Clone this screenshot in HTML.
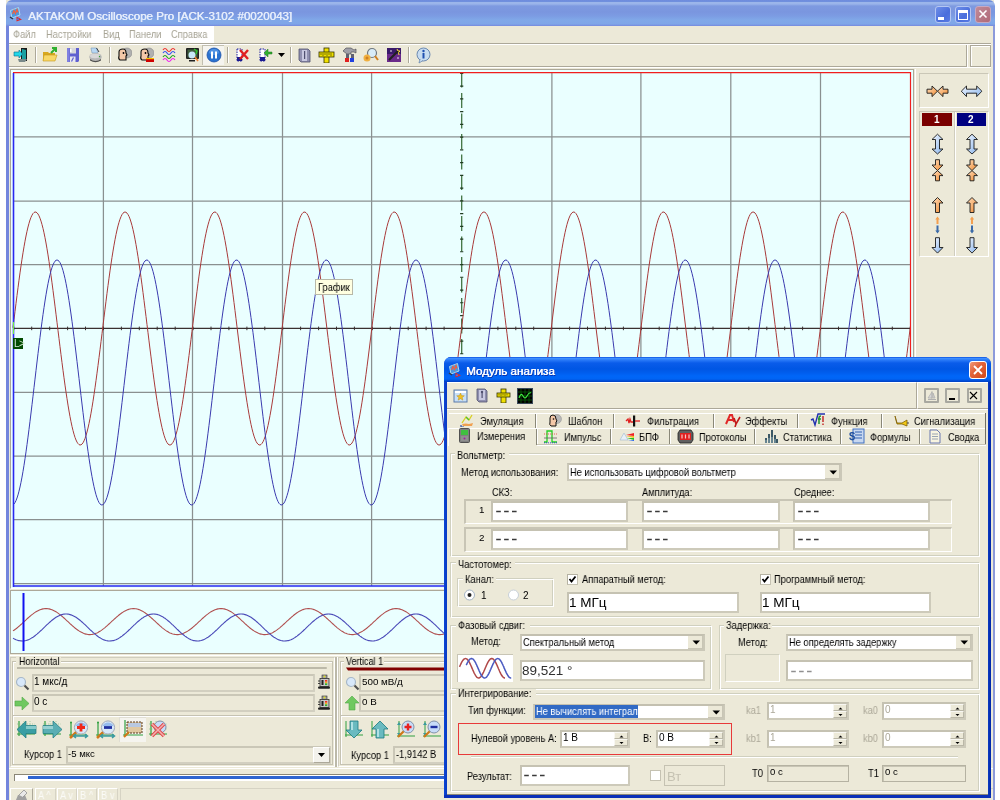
<!DOCTYPE html>
<html><head><meta charset="utf-8"><style>
html,body{margin:0;padding:0;width:1000px;height:800px;overflow:hidden;background:#fff;}
.a{position:absolute;}
.t{position:absolute;white-space:nowrap;font-family:"Liberation Sans", sans-serif;will-change:transform;}
svg{position:absolute;left:0;top:0;}
</style></head><body>
<div class="a" style="left:6px;top:0px;width:988px;height:800px;background:#ECE9D8;"></div><div class="a" style="left:6px;top:0px;width:989px;height:26px;background:linear-gradient(to bottom,#6F8CDD 0px,#7090DE 1.5px,#9CB6EA 2.5px,#9AB4EA 4px,#7E9AE0 6px,#7A96DF 12px,#7C9CE3 16px,#80A8E8 20px,#7FA6E8 24px,#7890E0 25.5px,#7088DC 26px);border-radius:6px 6px 0 0;"></div><div class="a" style="left:6px;top:26px;width:3px;height:774px;background:#7385DD;"></div><div class="a" style="left:993px;top:26px;width:2px;height:774px;background:#8C9ADA;"></div><svg class="a" style="left:9px;top:6px" width="16" height="16" viewBox="0 0 16 16"><path d="M1.5 4.5 L9.5 1.5 L11 9 L3 12 Z" fill="#4A98E0" stroke="#A8D8F0" stroke-width="1"/><path d="M3.5 8 L5 4.5 L6.5 7.5 L8 3.5 L9 6.5" stroke="#F06040" stroke-width="1.2" fill="none"/><path d="M1 11 L4 13" stroke="#303848" stroke-width="1.5"/><path d="M7.5 10.5 L13 13.5 L7.5 15.5 Z" fill="#E02828"/><circle cx="9" cy="13.2" r="0.9" fill="#4080F0"/></svg><div class="t" style="left:27.5px;top:10.18px;font-size:11.6px;line-height:11.6px;color:#E6EDFB;font-weight:normal;text-shadow:0.5px 0 0 #E6EDFB;">AKTAKOM Oscilloscope Pro [ACK-3102 #0020043]</div><div class="a" style="left:935px;top:6px;width:16px;height:17px;background:linear-gradient(135deg,#6F8FE8,#4A6EDC 60%,#5A7CE4);border:1px solid #B4C6F2;border-radius:3px;box-sizing:border-box;"></div><div class="a" style="left:955px;top:6px;width:16px;height:17px;background:linear-gradient(135deg,#6F8FE8,#4A6EDC 60%,#5A7CE4);border:1px solid #B4C6F2;border-radius:3px;box-sizing:border-box;"></div><div class="a" style="left:938px;top:17px;width:6px;height:3px;background:#fff;"></div><div class="a" style="left:958px;top:10px;width:10px;height:10px;border:1px solid #fff;border-top-width:3px;box-sizing:border-box;"></div><div class="a" style="left:975px;top:6px;width:16px;height:17px;background:linear-gradient(135deg,#C08A98,#B06A78);border:1px solid #C8A8C0;border-radius:3px;box-sizing:border-box;"></div><svg class="a" style="left:975px;top:6px" width="16" height="17"><path d="M4.5 4.5 L11.5 11.5 M11.5 4.5 L4.5 11.5" stroke="#fff" stroke-width="1.6"/></svg><div class="a" style="left:9px;top:26px;width:205px;height:17px;background:#fff;"></div><div class="t" style="left:13.0px;top:28.70px;font-size:10.51px;line-height:10.51px;color:#A7A495;font-weight:normal;transform:scaleX(0.885);transform-origin:0 0;">Файл</div><div class="t" style="left:45.8px;top:28.70px;font-size:10.51px;line-height:10.51px;color:#A7A495;font-weight:normal;transform:scaleX(0.885);transform-origin:0 0;">Настройки</div><div class="t" style="left:102.5px;top:28.70px;font-size:10.51px;line-height:10.51px;color:#A7A495;font-weight:normal;transform:scaleX(0.885);transform-origin:0 0;">Вид</div><div class="t" style="left:128.8px;top:28.70px;font-size:10.51px;line-height:10.51px;color:#A7A495;font-weight:normal;transform:scaleX(0.885);transform-origin:0 0;">Панели</div><div class="t" style="left:171.3px;top:28.70px;font-size:10.51px;line-height:10.51px;color:#A7A495;font-weight:normal;transform:scaleX(0.885);transform-origin:0 0;">Справка</div><div class="a" style="left:9px;top:43px;width:982px;height:1px;background:#ACA899;"></div><div class="a" style="left:9px;top:44px;width:982px;height:1px;background:#fff;"></div><div class="a" style="left:9px;top:66px;width:957px;height:1px;background:#ACA899;"></div><div class="a" style="left:9px;top:67px;width:982px;height:1px;background:#fff;"></div><div class="a" style="left:966px;top:45px;width:1px;height:22px;background:#ACA899;"></div><div class="a" style="left:967px;top:45px;width:1px;height:22px;background:#fff;"></div><div class="a" style="left:970px;top:45px;width:21px;height:22px;border:1px solid #ACA899;box-sizing:border-box;box-shadow:inset 1px 1px 0 #fff;"></div><div class="a" style="left:35px;top:47px;width:1px;height:16px;background:#ACA899;"></div><div class="a" style="left:36px;top:47px;width:1px;height:16px;background:#fff;"></div><div class="a" style="left:109px;top:47px;width:1px;height:16px;background:#ACA899;"></div><div class="a" style="left:110px;top:47px;width:1px;height:16px;background:#fff;"></div><div class="a" style="left:227px;top:47px;width:1px;height:16px;background:#ACA899;"></div><div class="a" style="left:228px;top:47px;width:1px;height:16px;background:#fff;"></div><div class="a" style="left:290px;top:47px;width:1px;height:16px;background:#ACA899;"></div><div class="a" style="left:291px;top:47px;width:1px;height:16px;background:#fff;"></div><div class="a" style="left:408px;top:47px;width:1px;height:16px;background:#ACA899;"></div><div class="a" style="left:409px;top:47px;width:1px;height:16px;background:#fff;"></div><div class="a" style="left:202px;top:45px;width:22px;height:20px;background:#F5F4EF;border-top:1px solid #C2BFB0;border-left:1px solid #C2BFB0;box-sizing:border-box;"></div><div class="a" style="left:10px;top:69px;width:904px;height:520px;background:#EAFFFF;border-top:1px solid #ACA899;border-left:1px solid #ACA899;border-right:1px solid #ACA899;border-bottom:1px solid #fff;box-sizing:border-box;"></div><svg class="a" style="left:0;top:0" width="1000" height="800"><line x1="103.4" y1="72" x2="103.4" y2="586" stroke="#8A9090" stroke-width="1.25"/><line x1="192.5" y1="72" x2="192.5" y2="586" stroke="#8A9090" stroke-width="1.25"/><line x1="282.5" y1="72" x2="282.5" y2="586" stroke="#8A9090" stroke-width="1.25"/><line x1="371.6" y1="72" x2="371.6" y2="586" stroke="#8A9090" stroke-width="1.25"/><line x1="551.9" y1="72" x2="551.9" y2="586" stroke="#8A9090" stroke-width="1.25"/><line x1="640.9" y1="72" x2="640.9" y2="586" stroke="#8A9090" stroke-width="1.25"/><line x1="730.8" y1="72" x2="730.8" y2="586" stroke="#8A9090" stroke-width="1.25"/><line x1="820.5" y1="72" x2="820.5" y2="586" stroke="#8A9090" stroke-width="1.25"/><line x1="13" y1="136.8" x2="910" y2="136.8" stroke="#8A9090" stroke-width="1.25"/><line x1="13" y1="201.2" x2="910" y2="201.2" stroke="#8A9090" stroke-width="1.25"/><line x1="13" y1="264.5" x2="910" y2="264.5" stroke="#8A9090" stroke-width="1.25"/><line x1="13" y1="392.3" x2="910" y2="392.3" stroke="#8A9090" stroke-width="1.25"/><line x1="13" y1="456.0" x2="910" y2="456.0" stroke="#8A9090" stroke-width="1.25"/><line x1="13" y1="519.5" x2="910" y2="519.5" stroke="#8A9090" stroke-width="1.25"/><line x1="13" y1="583.7" x2="910" y2="583.7" stroke="#8A9090" stroke-width="1.25"/><line x1="13" y1="328.4" x2="910" y2="328.4" stroke="#3A3030" stroke-width="1.25"/><path d="M13.8 326.59999999999997 V330.2 M31.7 326.59999999999997 V330.2 M49.7 326.59999999999997 V330.2 M67.6 326.59999999999997 V330.2 M85.5 326.59999999999997 V330.2 M103.4 326.59999999999997 V330.2 M121.4 326.59999999999997 V330.2 M139.3 326.59999999999997 V330.2 M157.2 326.59999999999997 V330.2 M175.2 326.59999999999997 V330.2 M193.1 326.59999999999997 V330.2 M211.0 326.59999999999997 V330.2 M228.9 326.59999999999997 V330.2 M246.9 326.59999999999997 V330.2 M264.8 326.59999999999997 V330.2 M282.7 326.59999999999997 V330.2 M300.6 326.59999999999997 V330.2 M318.6 326.59999999999997 V330.2 M336.5 326.59999999999997 V330.2 M354.4 326.59999999999997 V330.2 M372.4 326.59999999999997 V330.2 M390.3 326.59999999999997 V330.2 M408.2 326.59999999999997 V330.2 M426.1 326.59999999999997 V330.2 M444.1 326.59999999999997 V330.2 M462.0 326.59999999999997 V330.2 M479.9 326.59999999999997 V330.2 M497.9 326.59999999999997 V330.2 M515.8 326.59999999999997 V330.2 M533.7 326.59999999999997 V330.2 M551.6 326.59999999999997 V330.2 M569.6 326.59999999999997 V330.2 M587.5 326.59999999999997 V330.2 M605.4 326.59999999999997 V330.2 M623.4 326.59999999999997 V330.2 M641.3 326.59999999999997 V330.2 M659.2 326.59999999999997 V330.2 M677.1 326.59999999999997 V330.2 M695.1 326.59999999999997 V330.2 M713.0 326.59999999999997 V330.2 M730.9 326.59999999999997 V330.2 M748.8 326.59999999999997 V330.2 M766.8 326.59999999999997 V330.2 M784.7 326.59999999999997 V330.2 M802.6 326.59999999999997 V330.2 M820.6 326.59999999999997 V330.2 M838.5 326.59999999999997 V330.2 M856.4 326.59999999999997 V330.2 M874.3 326.59999999999997 V330.2 M892.3 326.59999999999997 V330.2 M910.2 326.59999999999997 V330.2" stroke="#3A3030" stroke-width="1"/><line x1="461.7" y1="72.6" x2="461.7" y2="586" stroke="#3C6E3C" stroke-width="1.25" stroke-dasharray="15 5.5"/><path d="M460.09999999999997 73.4 H463.3 M460.09999999999997 86.1 H463.3 M460.09999999999997 98.9 H463.3 M460.09999999999997 111.6 H463.3 M460.09999999999997 124.4 H463.3 M460.09999999999997 137.1 H463.3 M460.09999999999997 149.9 H463.3 M460.09999999999997 162.6 H463.3 M460.09999999999997 175.4 H463.3 M460.09999999999997 188.1 H463.3 M460.09999999999997 200.9 H463.3 M460.09999999999997 213.6 H463.3 M460.09999999999997 226.4 H463.3 M460.09999999999997 239.1 H463.3 M460.09999999999997 251.8 H463.3 M460.09999999999997 264.6 H463.3 M460.09999999999997 277.3 H463.3 M460.09999999999997 290.1 H463.3 M460.09999999999997 302.8 H463.3 M460.09999999999997 315.6 H463.3 M460.09999999999997 328.3 H463.3 M460.09999999999997 341.1 H463.3 M460.09999999999997 353.8 H463.3 M460.09999999999997 366.6 H463.3 M460.09999999999997 379.3 H463.3 M460.09999999999997 392.0 H463.3 M460.09999999999997 404.8 H463.3 M460.09999999999997 417.5 H463.3 M460.09999999999997 430.3 H463.3 M460.09999999999997 443.0 H463.3 M460.09999999999997 455.8 H463.3 M460.09999999999997 468.5 H463.3 M460.09999999999997 481.3 H463.3 M460.09999999999997 494.0 H463.3 M460.09999999999997 506.8 H463.3 M460.09999999999997 519.5 H463.3 M460.09999999999997 532.3 H463.3 M460.09999999999997 545.0 H463.3 M460.09999999999997 557.7 H463.3 M460.09999999999997 570.5 H463.3 M460.09999999999997 583.2 H463.3" stroke="#203A20" stroke-width="1.1"/><polyline points="13.0,327.7 14.0,319.5 15.0,311.4 16.0,303.4 17.0,295.5 18.0,287.8 19.0,280.2 20.0,272.9 21.0,265.9 22.0,259.2 23.0,252.8 24.0,246.8 25.0,241.2 26.0,236.0 27.0,231.3 28.0,227.0 29.0,223.3 30.0,220.0 31.0,217.3 32.0,215.2 33.0,213.5 34.0,212.5 35.0,212.0 36.0,212.1 37.0,212.8 38.0,214.0 39.0,215.8 40.0,218.2 41.0,221.1 42.0,224.5 43.0,228.4 44.0,232.8 45.0,237.7 46.0,243.0 47.0,248.8 48.0,254.9 49.0,261.4 50.0,268.3 51.0,275.4 52.0,282.8 53.0,290.4 54.0,298.2 55.0,306.1 56.0,314.2 57.0,322.3 58.0,330.5 59.0,338.6 60.0,346.7 61.0,354.7 62.0,362.6 63.0,370.3 64.0,377.8 65.0,385.1 66.0,392.1 67.0,398.7 68.0,405.1 69.0,411.0 70.0,416.6 71.0,421.7 72.0,426.4 73.0,430.5 74.0,434.2 75.0,437.4 76.0,440.0 77.0,442.1 78.0,443.6 79.0,444.6 80.0,445.0 81.0,444.8 82.0,444.1 83.0,442.8 84.0,440.9 85.0,438.5 86.0,435.5 87.0,432.0 88.0,428.0 89.0,423.5 90.0,418.6 91.0,413.2 92.0,407.4 93.0,401.2 94.0,394.6 95.0,387.8 96.0,380.6 97.0,373.2 98.0,365.5 99.0,357.7 100.0,349.8 101.0,341.7 102.0,333.6 103.0,325.4 104.0,317.3 105.0,309.2 106.0,301.2 107.0,293.3 108.0,285.6 109.0,278.2 110.0,270.9 111.0,264.0 112.0,257.4 113.0,251.1 114.0,245.2 115.0,239.7 116.0,234.6 117.0,230.0 118.0,225.9 119.0,222.3 120.0,219.2 121.0,216.7 122.0,214.6 123.0,213.2 124.0,212.3 125.0,212.0 126.0,212.3 127.0,213.1 128.0,214.5 129.0,216.4 130.0,218.9 131.0,222.0 132.0,225.5 133.0,229.6 134.0,234.1 135.0,239.2 136.0,244.6 137.0,250.5 138.0,256.7 139.0,263.3 140.0,270.2 141.0,277.4 142.0,284.9 143.0,292.5 144.0,300.4 145.0,308.4 146.0,316.4 147.0,324.6 148.0,332.7 149.0,340.9 150.0,349.0 151.0,356.9 152.0,364.8 153.0,372.4 154.0,379.9 155.0,387.1 156.0,394.0 157.0,400.5 158.0,406.8 159.0,412.6 160.0,418.1 161.0,423.0 162.0,427.6 163.0,431.6 164.0,435.2 165.0,438.2 166.0,440.7 167.0,442.6 168.0,444.0 169.0,444.8 170.0,445.0 171.0,444.7 172.0,443.8 173.0,442.3 174.0,440.3 175.0,437.7 176.0,434.6 177.0,430.9 178.0,426.8 179.0,422.2 180.0,417.1 181.0,411.6 182.0,405.7 183.0,399.4 184.0,392.7 185.0,385.8 186.0,378.5 187.0,371.1 188.0,363.4 189.0,355.5 190.0,347.5 191.0,339.4 192.0,331.3 193.0,323.1 194.0,315.0 195.0,306.9 196.0,299.0 197.0,291.2 198.0,283.5 199.0,276.1 200.0,269.0 201.0,262.1 202.0,255.6 203.0,249.4 204.0,243.6 205.0,238.2 206.0,233.3 207.0,228.8 208.0,224.9 209.0,221.4 210.0,218.4 211.0,216.0 212.0,214.2 213.0,212.9 214.0,212.2 215.0,212.0 216.0,212.4 217.0,213.4 218.0,215.0 219.0,217.1 220.0,219.7 221.0,222.9 222.0,226.6 223.0,230.8 224.0,235.5 225.0,240.6 226.0,246.2 227.0,252.2 228.0,258.5 229.0,265.2 230.0,272.2 231.0,279.5 232.0,287.0 233.0,294.7 234.0,302.6 235.0,310.6 236.0,318.7 237.0,326.9 238.0,335.0 239.0,343.1 240.0,351.2 241.0,359.1 242.0,366.9 243.0,374.5 244.0,381.9 245.0,389.0 246.0,395.8 247.0,402.3 248.0,408.4 249.0,414.2 250.0,419.5 251.0,424.4 252.0,428.8 253.0,432.7 254.0,436.1 255.0,438.9 256.0,441.3 257.0,443.0 258.0,444.2 259.0,444.9 260.0,445.0 261.0,444.5 262.0,443.4 263.0,441.8 264.0,439.6 265.0,436.9 266.0,433.6 267.0,429.8 268.0,425.6 269.0,420.8 270.0,415.6 271.0,410.0 272.0,404.0 273.0,397.6 274.0,390.8 275.0,383.8 276.0,376.5 277.0,368.9 278.0,361.2 279.0,353.3 280.0,345.2 281.0,337.1 282.0,329.0 283.0,320.8 284.0,312.7 285.0,304.7 286.0,296.8 287.0,289.0 288.0,281.4 289.0,274.1 290.0,267.0 291.0,260.2 292.0,253.8 293.0,247.7 294.0,242.0 295.0,236.8 296.0,232.0 297.0,227.7 298.0,223.8 299.0,220.5 300.0,217.7 301.0,215.5 302.0,213.8 303.0,212.6 304.0,212.1 305.0,212.1 306.0,212.7 307.0,213.8 308.0,215.5 309.0,217.8 310.0,220.6 311.0,223.9 312.0,227.7 313.0,232.1 314.0,236.9 315.0,242.2 316.0,247.8 317.0,253.9 318.0,260.4 319.0,267.1 320.0,274.2 321.0,281.6 322.0,289.1 323.0,296.9 324.0,304.8 325.0,312.9 326.0,321.0 327.0,329.2 328.0,337.3 329.0,345.4 330.0,353.4 331.0,361.3 332.0,369.1 333.0,376.6 334.0,383.9 335.0,391.0 336.0,397.7 337.0,404.1 338.0,410.1 339.0,415.7 340.0,420.9 341.0,425.6 342.0,429.9 343.0,433.7 344.0,436.9 345.0,439.6 346.0,441.8 347.0,443.4 348.0,444.5 349.0,445.0 350.0,444.9 351.0,444.2 352.0,443.0 353.0,441.2 354.0,438.9 355.0,436.0 356.0,432.6 357.0,428.7 358.0,424.3 359.0,419.4 360.0,414.1 361.0,408.3 362.0,402.2 363.0,395.7 364.0,388.9 365.0,381.8 366.0,374.4 367.0,366.8 368.0,359.0 369.0,351.0 370.0,343.0 371.0,334.9 372.0,326.7 373.0,318.6 374.0,310.5 375.0,302.5 376.0,294.6 377.0,286.9 378.0,279.3 379.0,272.1 380.0,265.1 381.0,258.4 382.0,252.1 383.0,246.1 384.0,240.5 385.0,235.4 386.0,230.7 387.0,226.5 388.0,222.8 389.0,219.7 390.0,217.0 391.0,214.9 392.0,213.4 393.0,212.4 394.0,212.0 395.0,212.2 396.0,212.9 397.0,214.2 398.0,216.1 399.0,218.5 400.0,221.4 401.0,224.9 402.0,228.9 403.0,233.4 404.0,238.3 405.0,243.7 406.0,249.5 407.0,255.7 408.0,262.2 409.0,269.1 410.0,276.3 411.0,283.7 412.0,291.3 413.0,299.1 414.0,307.1 415.0,315.1 416.0,323.3 417.0,331.4 418.0,339.6 419.0,347.7 420.0,355.7 421.0,363.5 422.0,371.2 423.0,378.7 424.0,385.9 425.0,392.9 426.0,399.5 427.0,405.8 428.0,411.7 429.0,417.2 430.0,422.3 431.0,426.9 432.0,431.0 433.0,434.6 434.0,437.7 435.0,440.3 436.0,442.3 437.0,443.8 438.0,444.7 439.0,445.0 440.0,444.8 441.0,443.9 442.0,442.6 443.0,440.6 444.0,438.1 445.0,435.1 446.0,431.5 447.0,427.5 448.0,423.0 449.0,417.9 450.0,412.5 451.0,406.7 452.0,400.4 453.0,393.8 454.0,386.9 455.0,379.7 456.0,372.3 457.0,364.6 458.0,356.8 459.0,348.8 460.0,340.7 461.0,332.6 462.0,324.4 463.0,316.3 464.0,308.2 465.0,300.2 466.0,292.4 467.0,284.7 468.0,277.3 469.0,270.1 470.0,263.2 471.0,256.6 472.0,250.3 473.0,244.5 474.0,239.1 475.0,234.0 476.0,229.5 477.0,225.5 478.0,221.9 479.0,218.9 480.0,216.4 481.0,214.4 482.0,213.1 483.0,212.2 484.0,212.0 485.0,212.3 486.0,213.2 487.0,214.7 488.0,216.7 489.0,219.3 490.0,222.4 491.0,226.0 492.0,230.1 493.0,234.7 494.0,239.8 495.0,245.3 496.0,251.2 497.0,257.5 498.0,264.1 499.0,271.1 500.0,278.3 501.0,285.8 502.0,293.5 503.0,301.3 504.0,309.3 505.0,317.4 506.0,325.6 507.0,333.7 508.0,341.9 509.0,349.9 510.0,357.9 511.0,365.7 512.0,373.3 513.0,380.7 514.0,387.9 515.0,394.8 516.0,401.3 517.0,407.5 518.0,413.3 519.0,418.7 520.0,423.6 521.0,428.1 522.0,432.1 523.0,435.6 524.0,438.5 525.0,440.9 526.0,442.8 527.0,444.1 528.0,444.8 529.0,445.0 530.0,444.6 531.0,443.6 532.0,442.1 533.0,440.0 534.0,437.3 535.0,434.2 536.0,430.5 537.0,426.3 538.0,421.6 539.0,416.5 540.0,410.9 541.0,404.9 542.0,398.6 543.0,391.9 544.0,384.9 545.0,377.7 546.0,370.1 547.0,362.4 548.0,354.5 549.0,346.5 550.0,338.4 551.0,330.3 552.0,322.1 553.0,314.0 554.0,306.0 555.0,298.0 556.0,290.2 557.0,282.6 558.0,275.2 559.0,268.1 560.0,261.3 561.0,254.8 562.0,248.7 563.0,242.9 564.0,237.6 565.0,232.7 566.0,228.3 567.0,224.4 568.0,221.0 569.0,218.1 570.0,215.8 571.0,214.0 572.0,212.8 573.0,212.1 574.0,212.0 575.0,212.5 576.0,213.6 577.0,215.2 578.0,217.4 579.0,220.1 580.0,223.3 581.0,227.1 582.0,231.4 583.0,236.1 584.0,241.3 585.0,246.9 586.0,252.9 587.0,259.3 588.0,266.0 589.0,273.1 590.0,280.4 591.0,287.9 592.0,295.7 593.0,303.6 594.0,311.6 595.0,319.7 596.0,327.8 597.0,336.0 598.0,344.1 599.0,352.2 600.0,360.1 601.0,367.9 602.0,375.4 603.0,382.8 604.0,389.9 605.0,396.6 606.0,403.1 607.0,409.2 608.0,414.8 609.0,420.1 610.0,424.9 611.0,429.3 612.0,433.1 613.0,436.4 614.0,439.2 615.0,441.5 616.0,443.2 617.0,444.3 618.0,444.9 619.0,444.9 620.0,444.4 621.0,443.2 622.0,441.5 623.0,439.3 624.0,436.5 625.0,433.2 626.0,429.3 627.0,425.0 628.0,420.2 629.0,415.0 630.0,409.3 631.0,403.2 632.0,396.8 633.0,390.0 634.0,382.9 635.0,375.6 636.0,368.0 637.0,360.2 638.0,352.3 639.0,344.3 640.0,336.2 641.0,328.0 642.0,319.9 643.0,311.8 644.0,303.7 645.0,295.8 646.0,288.1 647.0,280.5 648.0,273.2 649.0,266.2 650.0,259.4 651.0,253.0 652.0,247.0 653.0,241.4 654.0,236.2 655.0,231.4 656.0,227.2 657.0,223.4 658.0,220.1 659.0,217.4 660.0,215.2 661.0,213.6 662.0,212.5 663.0,212.0 664.0,212.1 665.0,212.8 666.0,214.0 667.0,215.7 668.0,218.1 669.0,220.9 670.0,224.3 671.0,228.2 672.0,232.6 673.0,237.5 674.0,242.8 675.0,248.6 676.0,254.7 677.0,261.2 678.0,268.0 679.0,275.1 680.0,282.5 681.0,290.1 682.0,297.9 683.0,305.8 684.0,313.9 685.0,322.0 686.0,330.1 687.0,338.3 688.0,346.4 689.0,354.4 690.0,362.3 691.0,370.0 692.0,377.5 693.0,384.8 694.0,391.8 695.0,398.5 696.0,404.8 697.0,410.8 698.0,416.4 699.0,421.5 700.0,426.2 701.0,430.4 702.0,434.1 703.0,437.3 704.0,439.9 705.0,442.0 706.0,443.6 707.0,444.6 708.0,445.0 709.0,444.8 710.0,444.1 711.0,442.8 712.0,441.0 713.0,438.6 714.0,435.6 715.0,432.1 716.0,428.2 717.0,423.7 718.0,418.8 719.0,413.4 720.0,407.6 721.0,401.4 722.0,394.9 723.0,388.0 724.0,380.9 725.0,373.5 726.0,365.8 727.0,358.0 728.0,350.1 729.0,342.0 730.0,333.9 731.0,325.7 732.0,317.6 733.0,309.5 734.0,301.5 735.0,293.6 736.0,285.9 737.0,278.5 738.0,271.2 739.0,264.3 740.0,257.6 741.0,251.3 742.0,245.4 743.0,239.9 744.0,234.8 745.0,230.2 746.0,226.1 747.0,222.4 748.0,219.3 749.0,216.7 750.0,214.7 751.0,213.2 752.0,212.3 753.0,212.0 754.0,212.2 755.0,213.0 756.0,214.4 757.0,216.3 758.0,218.8 759.0,221.8 760.0,225.4 761.0,229.4 762.0,234.0 763.0,238.9 764.0,244.4 765.0,250.2 766.0,256.5 767.0,263.0 768.0,269.9 769.0,277.1 770.0,284.6 771.0,292.2 772.0,300.1 773.0,308.0 774.0,316.1 775.0,324.3 776.0,332.4 777.0,340.6 778.0,348.6 779.0,356.6 780.0,364.5 781.0,372.1 782.0,379.6 783.0,386.8 784.0,393.7 785.0,400.3 786.0,406.5 787.0,412.4 788.0,417.8 789.0,422.9 790.0,427.4 791.0,431.5 792.0,435.0 793.0,438.1 794.0,440.6 795.0,442.5 796.0,443.9 797.0,444.7 798.0,445.0 799.0,444.7 800.0,443.8 801.0,442.4 802.0,440.3 803.0,437.8 804.0,434.7 805.0,431.1 806.0,427.0 807.0,422.4 808.0,417.3 809.0,411.8 810.0,405.9 811.0,399.6 812.0,393.0 813.0,386.1 814.0,378.8 815.0,371.4 816.0,363.7 817.0,355.8 818.0,347.8 819.0,339.7 820.0,331.6 821.0,323.4 822.0,315.3 823.0,307.2 824.0,299.3 825.0,291.5 826.0,283.8 827.0,276.4 828.0,269.2 829.0,262.4 830.0,255.8 831.0,249.6 832.0,243.8 833.0,238.4 834.0,233.5 835.0,229.0 836.0,225.0 837.0,221.5 838.0,218.5 839.0,216.1 840.0,214.2 841.0,212.9 842.0,212.2 843.0,212.0 844.0,212.4 845.0,213.4 846.0,214.9 847.0,217.0 848.0,219.6 849.0,222.8 850.0,226.5 851.0,230.6 852.0,235.3 853.0,240.4 854.0,246.0 855.0,251.9 856.0,258.3 857.0,264.9 858.0,271.9 859.0,279.2 860.0,286.7 861.0,294.4 862.0,302.3 863.0,310.3 864.0,318.4 865.0,326.5 866.0,334.7 867.0,342.8 868.0,350.9 869.0,358.8 870.0,366.6 871.0,374.2 872.0,381.6 873.0,388.7 874.0,395.6 875.0,402.1 876.0,408.2 877.0,414.0 878.0,419.3 879.0,424.2 880.0,428.6 881.0,432.5 882.0,435.9 883.0,438.8 884.0,441.2 885.0,443.0 886.0,444.2 887.0,444.9 888.0,445.0 889.0,444.5 890.0,443.5 891.0,441.8 892.0,439.7 893.0,437.0 894.0,433.7 895.0,430.0 896.0,425.7 897.0,421.0 898.0,415.8 899.0,410.2 900.0,404.2 901.0,397.8 902.0,391.1 903.0,384.1 904.0,376.8 905.0,369.2 906.0,361.5 907.0,353.6 908.0,345.6 909.0,337.5 910.0,329.3" fill="none" stroke="#A83A3A" stroke-width="1.0"/><polyline points="13.0,504.8 14.0,504.0 15.0,502.6 16.0,500.6 17.0,498.0 18.0,494.9 19.0,491.2 20.0,487.0 21.0,482.3 22.0,477.1 23.0,471.4 24.0,465.3 25.0,458.8 26.0,451.9 27.0,444.6 28.0,437.1 29.0,429.3 30.0,421.3 31.0,413.0 32.0,404.7 33.0,396.2 34.0,387.6 35.0,379.1 36.0,370.5 37.0,362.0 38.0,353.6 39.0,345.4 40.0,337.3 41.0,329.4 42.0,321.8 43.0,314.5 44.0,307.6 45.0,301.0 46.0,294.8 47.0,289.0 48.0,283.7 49.0,278.9 50.0,274.6 51.0,270.8 52.0,267.5 53.0,264.9 54.0,262.8 55.0,261.2 56.0,260.3 57.0,260.0 58.0,260.3 59.0,261.2 60.0,262.6 61.0,264.7 62.0,267.3 63.0,270.5 64.0,274.3 65.0,278.5 66.0,283.3 67.0,288.6 68.0,294.3 69.0,300.5 70.0,307.1 71.0,314.0 72.0,321.3 73.0,328.9 74.0,336.7 75.0,344.7 76.0,353.0 77.0,361.4 78.0,369.9 79.0,378.4 80.0,387.0 81.0,395.6 82.0,404.0 83.0,412.4 84.0,420.7 85.0,428.7 86.0,436.5 87.0,444.1 88.0,451.3 89.0,458.3 90.0,464.8 91.0,471.0 92.0,476.7 93.0,481.9 94.0,486.7 95.0,490.9 96.0,494.7 97.0,497.8 98.0,500.4 99.0,502.5 100.0,503.9 101.0,504.8 102.0,505.0 103.0,504.6 104.0,503.7 105.0,502.1 106.0,500.0 107.0,497.3 108.0,494.0 109.0,490.2 110.0,485.9 111.0,481.0 112.0,475.7 113.0,469.9 114.0,463.7 115.0,457.1 116.0,450.1 117.0,442.8 118.0,435.2 119.0,427.3 120.0,419.2 121.0,411.0 122.0,402.6 123.0,394.1 124.0,385.5 125.0,376.9 126.0,368.4 127.0,359.9 128.0,351.5 129.0,343.3 130.0,335.3 131.0,327.5 132.0,320.0 133.0,312.8 134.0,305.9 135.0,299.4 136.0,293.3 137.0,287.6 138.0,282.5 139.0,277.8 140.0,273.6 141.0,269.9 142.0,266.8 143.0,264.3 144.0,262.3 145.0,261.0 146.0,260.2 147.0,260.0 148.0,260.4 149.0,261.5 150.0,263.1 151.0,265.3 152.0,268.1 153.0,271.4 154.0,275.3 155.0,279.7 156.0,284.6 157.0,290.0 158.0,295.8 159.0,302.1 160.0,308.8 161.0,315.8 162.0,323.1 163.0,330.8 164.0,338.7 165.0,346.8 166.0,355.1 167.0,363.5 168.0,372.0 169.0,380.6 170.0,389.1 171.0,397.7 172.0,406.1 173.0,414.5 174.0,422.7 175.0,430.7 176.0,438.4 177.0,445.9 178.0,453.1 179.0,459.9 180.0,466.4 181.0,472.4 182.0,478.0 183.0,483.2 184.0,487.8 185.0,491.9 186.0,495.5 187.0,498.5 188.0,501.0 189.0,502.9 190.0,504.2 191.0,504.9 192.0,505.0 193.0,504.5 194.0,503.4 195.0,501.7 196.0,499.4 197.0,496.5 198.0,493.1 199.0,489.2 200.0,484.7 201.0,479.7 202.0,474.3 203.0,468.4 204.0,462.1 205.0,455.4 206.0,448.3 207.0,440.9 208.0,433.2 209.0,425.3 210.0,417.2 211.0,408.9 212.0,400.4 213.0,391.9 214.0,383.4 215.0,374.8 216.0,366.3 217.0,357.8 218.0,349.5 219.0,341.3 220.0,333.3 221.0,325.6 222.0,318.2 223.0,311.0 224.0,304.2 225.0,297.8 226.0,291.8 227.0,286.3 228.0,281.2 229.0,276.7 230.0,272.6 231.0,269.1 232.0,266.1 233.0,263.7 234.0,261.9 235.0,260.7 236.0,260.1 237.0,260.1 238.0,260.6 239.0,261.8 240.0,263.6 241.0,265.9 242.0,268.8 243.0,272.3 244.0,276.3 245.0,280.9 246.0,285.9 247.0,291.4 248.0,297.4 249.0,303.7 250.0,310.5 251.0,317.6 252.0,325.0 253.0,332.7 254.0,340.7 255.0,348.8 256.0,357.2 257.0,365.6 258.0,374.1 259.0,382.7 260.0,391.3 261.0,399.8 262.0,408.2 263.0,416.6 264.0,424.7 265.0,432.7 266.0,440.3 267.0,447.8 268.0,454.9 269.0,461.6 270.0,467.9 271.0,473.9 272.0,479.4 273.0,484.4 274.0,488.9 275.0,492.9 276.0,496.3 277.0,499.2 278.0,501.5 279.0,503.3 280.0,504.4 281.0,504.9 282.0,504.9 283.0,504.2 284.0,503.0 285.0,501.2 286.0,498.7 287.0,495.7 288.0,492.2 289.0,488.1 290.0,483.5 291.0,478.4 292.0,472.9 293.0,466.9 294.0,460.4 295.0,453.6 296.0,446.5 297.0,439.0 298.0,431.3 299.0,423.3 300.0,415.1 301.0,406.8 302.0,398.3 303.0,389.8 304.0,381.2 305.0,372.6 306.0,364.1 307.0,355.7 308.0,347.4 309.0,339.3 310.0,331.4 311.0,323.7 312.0,316.3 313.0,309.3 314.0,302.6 315.0,296.3 316.0,290.4 317.0,285.0 318.0,280.0 319.0,275.6 320.0,271.7 321.0,268.3 322.0,265.5 323.0,263.2 324.0,261.6 325.0,260.5 326.0,260.0 327.0,260.2 328.0,260.9 329.0,262.2 330.0,264.1 331.0,266.6 332.0,269.7 333.0,273.3 334.0,277.4 335.0,282.1 336.0,287.2 337.0,292.9 338.0,298.9 339.0,305.4 340.0,312.2 341.0,319.4 342.0,326.9 343.0,334.7 344.0,342.7 345.0,350.9 346.0,359.3 347.0,367.7 348.0,376.3 349.0,384.9 350.0,393.4 351.0,401.9 352.0,410.3 353.0,418.6 354.0,426.7 355.0,434.6 356.0,442.2 357.0,449.6 358.0,456.6 359.0,463.2 360.0,469.5 361.0,475.3 362.0,480.7 363.0,485.5 364.0,489.9 365.0,493.8 366.0,497.1 367.0,499.8 368.0,502.0 369.0,503.6 370.0,504.6 371.0,505.0 372.0,504.8 373.0,504.0 374.0,502.6 375.0,500.6 376.0,498.0 377.0,494.9 378.0,491.2 379.0,487.0 380.0,482.3 381.0,477.1 382.0,471.4 383.0,465.3 384.0,458.8 385.0,451.9 386.0,444.6 387.0,437.1 388.0,429.3 389.0,421.3 390.0,413.0 391.0,404.7 392.0,396.2 393.0,387.6 394.0,379.1 395.0,370.5 396.0,362.0 397.0,353.6 398.0,345.4 399.0,337.3 400.0,329.4 401.0,321.8 402.0,314.5 403.0,307.6 404.0,301.0 405.0,294.8 406.0,289.0 407.0,283.7 408.0,278.9 409.0,274.6 410.0,270.8 411.0,267.5 412.0,264.9 413.0,262.8 414.0,261.2 415.0,260.3 416.0,260.0 417.0,260.3 418.0,261.2 419.0,262.6 420.0,264.7 421.0,267.3 422.0,270.5 423.0,274.3 424.0,278.5 425.0,283.3 426.0,288.6 427.0,294.3 428.0,300.5 429.0,307.1 430.0,314.0 431.0,321.3 432.0,328.9 433.0,336.7 434.0,344.7 435.0,353.0 436.0,361.4 437.0,369.9 438.0,378.4 439.0,387.0 440.0,395.6 441.0,404.0 442.0,412.4 443.0,420.7 444.0,428.7 445.0,436.5 446.0,444.1 447.0,451.3 448.0,458.3 449.0,464.8 450.0,471.0 451.0,476.7 452.0,481.9 453.0,486.7 454.0,490.9 455.0,494.7 456.0,497.8 457.0,500.4 458.0,502.5 459.0,503.9 460.0,504.8 461.0,505.0 462.0,504.6 463.0,503.7 464.0,502.1 465.0,500.0 466.0,497.3 467.0,494.0 468.0,490.2 469.0,485.9 470.0,481.0 471.0,475.7 472.0,469.9 473.0,463.7 474.0,457.1 475.0,450.1 476.0,442.8 477.0,435.2 478.0,427.3 479.0,419.2 480.0,411.0 481.0,402.6 482.0,394.1 483.0,385.5 484.0,376.9 485.0,368.4 486.0,359.9 487.0,351.5 488.0,343.3 489.0,335.3 490.0,327.5 491.0,320.0 492.0,312.8 493.0,305.9 494.0,299.4 495.0,293.3 496.0,287.6 497.0,282.5 498.0,277.8 499.0,273.6 500.0,269.9 501.0,266.8 502.0,264.3 503.0,262.3 504.0,261.0 505.0,260.2 506.0,260.0 507.0,260.4 508.0,261.5 509.0,263.1 510.0,265.3 511.0,268.1 512.0,271.4 513.0,275.3 514.0,279.7 515.0,284.6 516.0,290.0 517.0,295.8 518.0,302.1 519.0,308.8 520.0,315.8 521.0,323.1 522.0,330.8 523.0,338.7 524.0,346.8 525.0,355.1 526.0,363.5 527.0,372.0 528.0,380.6 529.0,389.1 530.0,397.7 531.0,406.1 532.0,414.5 533.0,422.7 534.0,430.7 535.0,438.4 536.0,445.9 537.0,453.1 538.0,459.9 539.0,466.4 540.0,472.4 541.0,478.0 542.0,483.2 543.0,487.8 544.0,491.9 545.0,495.5 546.0,498.5 547.0,501.0 548.0,502.9 549.0,504.2 550.0,504.9 551.0,505.0 552.0,504.5 553.0,503.4 554.0,501.7 555.0,499.4 556.0,496.5 557.0,493.1 558.0,489.2 559.0,484.7 560.0,479.7 561.0,474.3 562.0,468.4 563.0,462.1 564.0,455.4 565.0,448.3 566.0,440.9 567.0,433.2 568.0,425.3 569.0,417.2 570.0,408.9 571.0,400.4 572.0,391.9 573.0,383.4 574.0,374.8 575.0,366.3 576.0,357.8 577.0,349.5 578.0,341.3 579.0,333.3 580.0,325.6 581.0,318.2 582.0,311.0 583.0,304.2 584.0,297.8 585.0,291.8 586.0,286.3 587.0,281.2 588.0,276.7 589.0,272.6 590.0,269.1 591.0,266.1 592.0,263.7 593.0,261.9 594.0,260.7 595.0,260.1 596.0,260.1 597.0,260.6 598.0,261.8 599.0,263.6 600.0,265.9 601.0,268.8 602.0,272.3 603.0,276.3 604.0,280.9 605.0,285.9 606.0,291.4 607.0,297.4 608.0,303.7 609.0,310.5 610.0,317.6 611.0,325.0 612.0,332.7 613.0,340.7 614.0,348.8 615.0,357.2 616.0,365.6 617.0,374.1 618.0,382.7 619.0,391.3 620.0,399.8 621.0,408.2 622.0,416.6 623.0,424.7 624.0,432.7 625.0,440.3 626.0,447.8 627.0,454.9 628.0,461.6 629.0,467.9 630.0,473.9 631.0,479.4 632.0,484.4 633.0,488.9 634.0,492.9 635.0,496.3 636.0,499.2 637.0,501.5 638.0,503.3 639.0,504.4 640.0,504.9 641.0,504.9 642.0,504.2 643.0,503.0 644.0,501.2 645.0,498.7 646.0,495.7 647.0,492.2 648.0,488.1 649.0,483.5 650.0,478.4 651.0,472.9 652.0,466.9 653.0,460.4 654.0,453.6 655.0,446.5 656.0,439.0 657.0,431.3 658.0,423.3 659.0,415.1 660.0,406.8 661.0,398.3 662.0,389.8 663.0,381.2 664.0,372.6 665.0,364.1 666.0,355.7 667.0,347.4 668.0,339.3 669.0,331.4 670.0,323.7 671.0,316.3 672.0,309.3 673.0,302.6 674.0,296.3 675.0,290.4 676.0,285.0 677.0,280.0 678.0,275.6 679.0,271.7 680.0,268.3 681.0,265.5 682.0,263.2 683.0,261.6 684.0,260.5 685.0,260.0 686.0,260.2 687.0,260.9 688.0,262.2 689.0,264.1 690.0,266.6 691.0,269.7 692.0,273.3 693.0,277.4 694.0,282.1 695.0,287.2 696.0,292.9 697.0,298.9 698.0,305.4 699.0,312.2 700.0,319.4 701.0,326.9 702.0,334.7 703.0,342.7 704.0,350.9 705.0,359.3 706.0,367.7 707.0,376.3 708.0,384.9 709.0,393.4 710.0,401.9 711.0,410.3 712.0,418.6 713.0,426.7 714.0,434.6 715.0,442.2 716.0,449.6 717.0,456.6 718.0,463.2 719.0,469.5 720.0,475.3 721.0,480.7 722.0,485.5 723.0,489.9 724.0,493.8 725.0,497.1 726.0,499.8 727.0,502.0 728.0,503.6 729.0,504.6 730.0,505.0 731.0,504.8 732.0,504.0 733.0,502.6 734.0,500.6 735.0,498.0 736.0,494.9 737.0,491.2 738.0,487.0 739.0,482.3 740.0,477.1 741.0,471.4 742.0,465.3 743.0,458.8 744.0,451.9 745.0,444.6 746.0,437.1 747.0,429.3 748.0,421.3 749.0,413.0 750.0,404.7 751.0,396.2 752.0,387.6 753.0,379.1 754.0,370.5 755.0,362.0 756.0,353.6 757.0,345.4 758.0,337.3 759.0,329.4 760.0,321.8 761.0,314.5 762.0,307.6 763.0,301.0 764.0,294.8 765.0,289.0 766.0,283.7 767.0,278.9 768.0,274.6 769.0,270.8 770.0,267.5 771.0,264.9 772.0,262.8 773.0,261.2 774.0,260.3 775.0,260.0 776.0,260.3 777.0,261.2 778.0,262.6 779.0,264.7 780.0,267.3 781.0,270.5 782.0,274.3 783.0,278.5 784.0,283.3 785.0,288.6 786.0,294.3 787.0,300.5 788.0,307.1 789.0,314.0 790.0,321.3 791.0,328.9 792.0,336.7 793.0,344.7 794.0,353.0 795.0,361.4 796.0,369.9 797.0,378.4 798.0,387.0 799.0,395.6 800.0,404.0 801.0,412.4 802.0,420.7 803.0,428.7 804.0,436.5 805.0,444.1 806.0,451.3 807.0,458.3 808.0,464.8 809.0,471.0 810.0,476.7 811.0,481.9 812.0,486.7 813.0,490.9 814.0,494.7 815.0,497.8 816.0,500.4 817.0,502.5 818.0,503.9 819.0,504.8 820.0,505.0 821.0,504.6 822.0,503.7 823.0,502.1 824.0,500.0 825.0,497.3 826.0,494.0 827.0,490.2 828.0,485.9 829.0,481.0 830.0,475.7 831.0,469.9 832.0,463.7 833.0,457.1 834.0,450.1 835.0,442.8 836.0,435.2 837.0,427.3 838.0,419.2 839.0,411.0 840.0,402.6 841.0,394.1 842.0,385.5 843.0,376.9 844.0,368.4 845.0,359.9 846.0,351.5 847.0,343.3 848.0,335.3 849.0,327.5 850.0,320.0 851.0,312.8 852.0,305.9 853.0,299.4 854.0,293.3 855.0,287.6 856.0,282.5 857.0,277.8 858.0,273.6 859.0,269.9 860.0,266.8 861.0,264.3 862.0,262.3 863.0,261.0 864.0,260.2 865.0,260.0 866.0,260.4 867.0,261.5 868.0,263.1 869.0,265.3 870.0,268.1 871.0,271.4 872.0,275.3 873.0,279.7 874.0,284.6 875.0,290.0 876.0,295.8 877.0,302.1 878.0,308.8 879.0,315.8 880.0,323.1 881.0,330.8 882.0,338.7 883.0,346.8 884.0,355.1 885.0,363.5 886.0,372.0 887.0,380.6 888.0,389.1 889.0,397.7 890.0,406.1 891.0,414.5 892.0,422.7 893.0,430.7 894.0,438.4 895.0,445.9 896.0,453.1 897.0,459.9 898.0,466.4 899.0,472.4 900.0,478.0 901.0,483.2 902.0,487.8 903.0,491.9 904.0,495.5 905.0,498.5 906.0,501.0 907.0,502.9 908.0,504.2 909.0,504.9 910.0,505.0" fill="none" stroke="#3A3AAE" stroke-width="1.0"/><line x1="13" y1="72.6" x2="911" y2="72.6" stroke="#F01E1E" stroke-width="1.4"/><line x1="910.5" y1="72" x2="910.5" y2="586" stroke="#F01E1E" stroke-width="1.2"/><line x1="13.5" y1="73" x2="13.5" y2="587" stroke="#2828F0" stroke-width="1.6"/><line x1="13" y1="586" x2="911" y2="586" stroke="#2828F0" stroke-width="1.6"/></svg><div class="a" style="left:13px;top:338px;width:10px;height:11px;background:#004A00;"></div><div class="t" style="left:13.6px;top:339.14px;font-size:10px;line-height:10px;color:#D0E8D0;font-weight:normal;letter-spacing:-0.5px;">L&gt;</div><div class="a" style="left:13px;top:322px;width:1px;height:12px;background:#70F040;"></div><div class="a" style="left:315px;top:279px;width:38px;height:16px;background:#FFFFE1;border:1px solid #B8B8A8;box-sizing:border-box;"></div><div class="t" style="left:318.0px;top:281.60px;font-size:10.51px;line-height:10.51px;color:#000;font-weight:normal;transform:scaleX(0.885);transform-origin:0 0;">График</div><div class="a" style="left:915px;top:69px;width:76px;height:520px;border-left:1px solid #fff;box-sizing:border-box;"></div><div class="a" style="left:919px;top:73px;width:70px;height:35px;border:1px solid #CAC7B7;border-right-color:#fff;border-bottom-color:#fff;box-sizing:border-box;"></div><div class="a" style="left:919px;top:111px;width:70px;height:146px;border:1px solid #CAC7B7;border-right-color:#fff;border-bottom-color:#fff;box-sizing:border-box;"></div><div class="a" style="left:954px;top:112px;width:1px;height:144px;background:#D0CDBE;"></div><div class="a" style="left:955px;top:112px;width:1px;height:144px;background:#fff;"></div><div class="a" style="left:922px;top:113px;width:30px;height:13px;background:#7A0000;"></div><div class="t" style="left:933.5px;top:114.53px;font-size:10px;line-height:10px;color:#fff;font-weight:bold;">1</div><div class="a" style="left:957px;top:113px;width:29px;height:13px;background:#000080;"></div><div class="t" style="left:968.0px;top:114.53px;font-size:10px;line-height:10px;color:#fff;font-weight:bold;">2</div><svg class="a" style="left:0;top:0" width="1000" height="800"><defs><linearGradient id="go" x1="0" y1="0" x2="1" y2="1"><stop offset="0" stop-color="#FFE0C0"/><stop offset="1" stop-color="#F08A30"/></linearGradient><linearGradient id="gb" x1="0" y1="0" x2="1" y2="1"><stop offset="0" stop-color="#F4F8FF"/><stop offset="1" stop-color="#88B4EC"/></linearGradient></defs><path d="M927 89.2 H932 V86 L937.5 91.2 L932 96.6 V93.2 H927 Z" fill="url(#go)" stroke="#1A1A1A" stroke-width="0.9"/><path d="M948 89.2 H943 V86 L937.5 91.2 L943 96.6 V93.2 H948 Z" fill="url(#go)" stroke="#1A1A1A" stroke-width="0.9"/><path d="M961.3 91.2 L966.5 86 V89.2 H976.7 V86 L981.9 91.2 L976.7 96.6 V93.2 H966.5 V96.6 Z" fill="url(#gb)" stroke="#1A1A1A" stroke-width="0.9"/><path d="M937.5 134.2 L943.0 139.5 H939.5 V149 H943.0 L937.5 154 L932.0 149 H935.5 V139.5 H932.0 Z" fill="url(#gb)" stroke="#1A1A1A" stroke-width="0.9"/><path d="M935.5 159.7 H939.5 V165 H943.0 L937.5 170.6 L932.0 165 H935.5 Z" fill="url(#go)" stroke="#1A1A1A" stroke-width="0.9"/><path d="M935.5 180.8 H939.5 V175.6 H943.0 L937.5 170.6 L932.0 175.6 H935.5 Z" fill="url(#go)" stroke="#1A1A1A" stroke-width="0.9"/><path d="M937.5 197.5 L943.0 203 H939.5 V212.5 H935.5 V203 H932.0 Z" fill="url(#go)" stroke="#1A1A1A" stroke-width="0.9"/><path d="M937.5 216.6 L939.7 219.5 H938.5 V224 H936.5 V219.5 H935.3 Z" fill="#F4A050"/><path d="M937.5 233.6 L939.7 230.5 H938.5 V225.5 H936.5 V230.5 H935.3 Z" fill="#3A6AA8"/><path d="M937.5 253.1 L943.0 247.5 H939.5 V237.7 H935.5 V247.5 H932.0 Z" fill="url(#gb)" stroke="#1A1A1A" stroke-width="0.9"/><path d="M972 134.2 L977.5 139.5 H974 V149 H977.5 L972 154 L966.5 149 H970 V139.5 H966.5 Z" fill="url(#gb)" stroke="#1A1A1A" stroke-width="0.9"/><path d="M970 159.7 H974 V165 H977.5 L972 170.6 L966.5 165 H970 Z" fill="url(#go)" stroke="#1A1A1A" stroke-width="0.9"/><path d="M970 180.8 H974 V175.6 H977.5 L972 170.6 L966.5 175.6 H970 Z" fill="url(#go)" stroke="#1A1A1A" stroke-width="0.9"/><path d="M972 197.5 L977.5 203 H974 V212.5 H970 V203 H966.5 Z" fill="url(#go)" stroke="#1A1A1A" stroke-width="0.9"/><path d="M972 216.6 L974.2 219.5 H973 V224 H971 V219.5 H969.8 Z" fill="#F4A050"/><path d="M972 233.6 L974.2 230.5 H973 V225.5 H971 V230.5 H969.8 Z" fill="#3A6AA8"/><path d="M972 253.1 L977.5 247.5 H974 V237.7 H970 V247.5 H966.5 Z" fill="url(#gb)" stroke="#1A1A1A" stroke-width="0.9"/></svg><div class="a" style="left:10px;top:590px;width:981px;height:64px;background:#EAFFFF;border-top:1px solid #ACA899;border-left:1px solid #ACA899;border-bottom:1px solid #ACA899;box-sizing:border-box;"></div><div class="a" style="left:10px;top:655px;width:981px;height:1px;background:#fff;"></div><svg class="a" style="left:0;top:0" width="1000" height="800"><polyline points="13,630.9 14,630.2 15,629.5 16,628.8 17,628.0 18,627.1 19,626.3 20,625.4 21,624.5 22,623.6 23,622.6 24,621.7 25,620.8 26,619.9 27,618.9 28,618.0 29,617.1 30,616.3 31,615.4 32,614.6 33,613.9 34,613.1 35,612.4 36,611.8 37,611.2 38,610.7 39,610.2 40,609.8 41,609.4 42,609.1 43,608.9 44,608.7 45,608.6 46,608.6 47,608.6 48,608.7 49,608.9 50,609.1 51,609.4 52,609.8 53,610.2 54,610.7 55,611.2 56,611.8 57,612.4 58,613.1 59,613.9 60,614.6 61,615.4 62,616.3 63,617.1 64,618.0 65,618.9 66,619.9 67,620.8 68,621.7 69,622.6 70,623.6 71,624.5 72,625.4 73,626.3 74,627.1 75,628.0 76,628.8 77,629.5 78,630.2 79,630.9 80,631.5 81,632.1 82,632.6 83,633.1 84,633.5 85,633.9 86,634.1 87,634.3 88,634.5 89,634.6 90,634.6 91,634.5 92,634.4 93,634.2 94,634.0 95,633.7 96,633.3 97,632.9 98,632.4 99,631.8 100,631.2 101,630.6 102,629.9 103,629.1 104,628.4 105,627.6 106,626.7 107,625.8 108,624.9 109,624.0 110,623.1 111,622.2 112,621.2 113,620.3 114,619.4 115,618.5 116,617.6 117,616.7 118,615.9 119,615.0 120,614.2 121,613.5 122,612.8 123,612.1 124,611.5 125,610.9 126,610.4 127,610.0 128,609.6 129,609.3 130,609.0 131,608.8 132,608.7 133,608.6 134,608.6 135,608.7 136,608.8 137,609.0 138,609.3 139,609.6 140,610.0 141,610.4 142,610.9 143,611.5 144,612.1 145,612.8 146,613.5 147,614.2 148,615.0 149,615.9 150,616.7 151,617.6 152,618.5 153,619.4 154,620.3 155,621.2 156,622.2 157,623.1 158,624.0 159,624.9 160,625.8 161,626.7 162,627.6 163,628.4 164,629.1 165,629.9 166,630.6 167,631.2 168,631.8 169,632.4 170,632.9 171,633.3 172,633.7 173,634.0 174,634.2 175,634.4 176,634.5 177,634.6 178,634.6 179,634.5 180,634.3 181,634.1 182,633.9 183,633.5 184,633.1 185,632.6 186,632.1 187,631.5 188,630.9 189,630.2 190,629.5 191,628.8 192,628.0 193,627.1 194,626.3 195,625.4 196,624.5 197,623.6 198,622.6 199,621.7 200,620.8 201,619.9 202,618.9 203,618.0 204,617.1 205,616.3 206,615.4 207,614.6 208,613.9 209,613.1 210,612.4 211,611.8 212,611.2 213,610.7 214,610.2 215,609.8 216,609.4 217,609.1 218,608.9 219,608.7 220,608.6 221,608.6 222,608.6 223,608.7 224,608.9 225,609.1 226,609.4 227,609.8 228,610.2 229,610.7 230,611.2 231,611.8 232,612.4 233,613.1 234,613.9 235,614.6 236,615.4 237,616.3 238,617.1 239,618.0 240,618.9 241,619.9 242,620.8 243,621.7 244,622.6 245,623.6 246,624.5 247,625.4 248,626.3 249,627.1 250,628.0 251,628.8 252,629.5 253,630.2 254,630.9 255,631.5 256,632.1 257,632.6 258,633.1 259,633.5 260,633.9 261,634.1 262,634.3 263,634.5 264,634.6 265,634.6 266,634.5 267,634.4 268,634.2 269,634.0 270,633.7 271,633.3 272,632.9 273,632.4 274,631.8 275,631.2 276,630.6 277,629.9 278,629.1 279,628.4 280,627.6 281,626.7 282,625.8 283,624.9 284,624.0 285,623.1 286,622.2 287,621.2 288,620.3 289,619.4 290,618.5 291,617.6 292,616.7 293,615.9 294,615.0 295,614.2 296,613.5 297,612.8 298,612.1 299,611.5 300,610.9 301,610.4 302,610.0 303,609.6 304,609.3 305,609.0 306,608.8 307,608.7 308,608.6 309,608.6 310,608.7 311,608.8 312,609.0 313,609.3 314,609.6 315,610.0 316,610.4 317,610.9 318,611.5 319,612.1 320,612.8 321,613.5 322,614.2 323,615.0 324,615.9 325,616.7 326,617.6 327,618.5 328,619.4 329,620.3 330,621.2 331,622.2 332,623.1 333,624.0 334,624.9 335,625.8 336,626.7 337,627.6 338,628.4 339,629.1 340,629.9 341,630.6 342,631.2 343,631.8 344,632.4 345,632.9 346,633.3 347,633.7 348,634.0 349,634.2 350,634.4 351,634.5 352,634.6 353,634.6 354,634.5 355,634.3 356,634.1 357,633.9 358,633.5 359,633.1 360,632.6 361,632.1 362,631.5 363,630.9 364,630.2 365,629.5 366,628.8 367,628.0 368,627.1 369,626.3 370,625.4 371,624.5 372,623.6 373,622.6 374,621.7 375,620.8 376,619.9 377,618.9 378,618.0 379,617.1 380,616.3 381,615.4 382,614.6 383,613.9 384,613.1 385,612.4 386,611.8 387,611.2 388,610.7 389,610.2 390,609.8 391,609.4 392,609.1 393,608.9 394,608.7 395,608.6 396,608.6 397,608.6 398,608.7 399,608.9 400,609.1 401,609.4 402,609.8 403,610.2 404,610.7 405,611.2 406,611.8 407,612.4 408,613.1 409,613.9 410,614.6 411,615.4 412,616.3 413,617.1 414,618.0 415,618.9 416,619.9 417,620.8 418,621.7 419,622.6 420,623.6 421,624.5 422,625.4 423,626.3 424,627.1 425,628.0 426,628.8 427,629.5 428,630.2 429,630.9 430,631.5 431,632.1 432,632.6 433,633.1 434,633.5 435,633.9 436,634.1 437,634.3 438,634.5 439,634.6 440,634.6 441,634.5 442,634.4 443,634.2 444,634.0 445,633.7 446,633.3 447,632.9 448,632.4 449,631.8 450,631.2 451,630.6 452,629.9 453,629.1 454,628.4 455,627.6 456,626.7 457,625.8 458,624.9 459,624.0 460,623.1 461,622.2 462,621.2 463,620.3 464,619.4 465,618.5 466,617.6 467,616.7 468,615.9 469,615.0 470,614.2 471,613.5 472,612.8 473,612.1 474,611.5 475,610.9 476,610.4 477,610.0 478,609.6 479,609.3 480,609.0 481,608.8 482,608.7 483,608.6 484,608.6 485,608.7 486,608.8 487,609.0 488,609.3 489,609.6 490,610.0 491,610.4 492,610.9 493,611.5 494,612.1 495,612.8 496,613.5 497,614.2 498,615.0 499,615.9 500,616.7 501,617.6 502,618.5 503,619.4 504,620.3 505,621.2 506,622.2 507,623.1 508,624.0 509,624.9 510,625.8 511,626.7 512,627.6 513,628.4 514,629.1 515,629.9 516,630.6 517,631.2 518,631.8 519,632.4 520,632.9 521,633.3 522,633.7 523,634.0 524,634.2 525,634.4 526,634.5 527,634.6 528,634.6 529,634.5 530,634.3 531,634.1 532,633.9 533,633.5 534,633.1 535,632.6 536,632.1 537,631.5 538,630.9 539,630.2 540,629.5 541,628.8 542,628.0 543,627.1 544,626.3 545,625.4 546,624.5 547,623.6 548,622.6 549,621.7 550,620.8 551,619.9 552,618.9 553,618.0 554,617.1 555,616.3 556,615.4 557,614.6 558,613.9 559,613.1 560,612.4 561,611.8 562,611.2 563,610.7 564,610.2 565,609.8 566,609.4 567,609.1 568,608.9 569,608.7 570,608.6 571,608.6 572,608.6 573,608.7 574,608.9 575,609.1 576,609.4 577,609.8 578,610.2 579,610.7 580,611.2 581,611.8 582,612.4 583,613.1 584,613.9 585,614.6 586,615.4 587,616.3 588,617.1 589,618.0 590,618.9 591,619.9 592,620.8 593,621.7 594,622.6 595,623.6 596,624.5 597,625.4 598,626.3 599,627.1 600,628.0 601,628.8 602,629.5 603,630.2 604,630.9 605,631.5 606,632.1 607,632.6 608,633.1 609,633.5 610,633.9 611,634.1 612,634.3 613,634.5 614,634.6 615,634.6 616,634.5 617,634.4 618,634.2 619,634.0 620,633.7 621,633.3 622,632.9 623,632.4 624,631.8 625,631.2 626,630.6 627,629.9 628,629.1 629,628.4 630,627.6 631,626.7 632,625.8 633,624.9 634,624.0 635,623.1 636,622.2 637,621.2 638,620.3 639,619.4 640,618.5 641,617.6 642,616.7 643,615.9 644,615.0 645,614.2 646,613.5 647,612.8 648,612.1 649,611.5 650,610.9 651,610.4 652,610.0 653,609.6 654,609.3 655,609.0 656,608.8 657,608.7 658,608.6 659,608.6 660,608.7 661,608.8 662,609.0 663,609.3 664,609.6 665,610.0 666,610.4 667,610.9 668,611.5 669,612.1 670,612.8 671,613.5 672,614.2 673,615.0 674,615.9 675,616.7 676,617.6 677,618.5 678,619.4 679,620.3 680,621.2 681,622.2 682,623.1 683,624.0 684,624.9 685,625.8 686,626.7 687,627.6 688,628.4 689,629.1 690,629.9 691,630.6 692,631.2 693,631.8 694,632.4 695,632.9 696,633.3 697,633.7 698,634.0 699,634.2 700,634.4 701,634.5 702,634.6 703,634.6 704,634.5 705,634.3 706,634.1 707,633.9 708,633.5 709,633.1 710,632.6 711,632.1 712,631.5 713,630.9 714,630.2 715,629.5 716,628.8 717,628.0 718,627.1 719,626.3 720,625.4 721,624.5 722,623.6 723,622.6 724,621.7 725,620.8 726,619.9 727,618.9 728,618.0 729,617.1 730,616.3 731,615.4 732,614.6 733,613.9 734,613.1 735,612.4 736,611.8 737,611.2 738,610.7 739,610.2 740,609.8 741,609.4 742,609.1 743,608.9 744,608.7 745,608.6 746,608.6 747,608.6 748,608.7 749,608.9 750,609.1 751,609.4 752,609.8 753,610.2 754,610.7 755,611.2 756,611.8 757,612.4 758,613.1 759,613.9 760,614.6 761,615.4 762,616.3 763,617.1 764,618.0 765,618.9 766,619.9 767,620.8 768,621.7 769,622.6 770,623.6 771,624.5 772,625.4 773,626.3 774,627.1 775,628.0 776,628.8 777,629.5 778,630.2 779,630.9 780,631.5 781,632.1 782,632.6 783,633.1 784,633.5 785,633.9 786,634.1 787,634.3 788,634.5 789,634.6 790,634.6 791,634.5 792,634.4 793,634.2 794,634.0 795,633.7 796,633.3 797,632.9 798,632.4 799,631.8 800,631.2 801,630.6 802,629.9 803,629.1 804,628.4 805,627.6 806,626.7 807,625.8 808,624.9 809,624.0 810,623.1 811,622.2 812,621.2 813,620.3 814,619.4 815,618.5 816,617.6 817,616.7 818,615.9 819,615.0 820,614.2 821,613.5 822,612.8 823,612.1 824,611.5 825,610.9 826,610.4 827,610.0 828,609.6 829,609.3 830,609.0 831,608.8 832,608.7 833,608.6 834,608.6 835,608.7 836,608.8 837,609.0 838,609.3 839,609.6 840,610.0 841,610.4 842,610.9 843,611.5 844,612.1 845,612.8 846,613.5 847,614.2 848,615.0 849,615.9 850,616.7 851,617.6 852,618.5 853,619.4 854,620.3 855,621.2 856,622.2 857,623.1 858,624.0 859,624.9 860,625.8 861,626.7 862,627.6 863,628.4 864,629.1 865,629.9 866,630.6 867,631.2 868,631.8 869,632.4 870,632.9 871,633.3 872,633.7 873,634.0 874,634.2 875,634.4 876,634.5 877,634.6 878,634.6 879,634.5 880,634.3 881,634.1 882,633.9 883,633.5 884,633.1 885,632.6 886,632.1 887,631.5 888,630.9 889,630.2 890,629.5 891,628.8 892,628.0 893,627.1 894,626.3 895,625.4 896,624.5 897,623.6 898,622.6 899,621.7 900,620.8 901,619.9 902,618.9 903,618.0 904,617.1 905,616.3 906,615.4 907,614.6 908,613.9 909,613.1 910,612.4 911,611.8 912,611.2 913,610.7 914,610.2 915,609.8 916,609.4 917,609.1 918,608.9 919,608.7 920,608.6 921,608.6 922,608.6 923,608.7 924,608.9 925,609.1 926,609.4 927,609.8 928,610.2 929,610.7 930,611.2 931,611.8 932,612.4 933,613.1 934,613.9 935,614.6 936,615.4 937,616.3 938,617.1 939,618.0 940,618.9 941,619.9 942,620.8 943,621.7 944,622.6 945,623.6 946,624.5 947,625.4 948,626.3 949,627.1 950,628.0 951,628.8 952,629.5 953,630.2 954,630.9 955,631.5 956,632.1 957,632.6 958,633.1 959,633.5 960,633.9 961,634.1 962,634.3 963,634.5 964,634.6 965,634.6 966,634.5 967,634.4 968,634.2 969,634.0 970,633.7 971,633.3 972,632.9 973,632.4 974,631.8 975,631.2 976,630.6 977,629.9 978,629.1 979,628.4 980,627.6 981,626.7 982,625.8 983,624.9 984,624.0 985,623.1 986,622.2 987,621.2 988,620.3 989,619.4 990,618.5 991,617.6" fill="none" stroke="#B05050" stroke-width="1.1"/><polyline points="13,638.1 14,638.7 15,639.2 16,639.7 17,640.1 18,640.4 19,640.6 20,640.8 21,640.9 22,641.0 23,641.0 24,640.9 25,640.7 26,640.5 27,640.2 28,639.9 29,639.4 30,639.0 31,638.4 32,637.8 33,637.2 34,636.5 35,635.7 36,634.9 37,634.1 38,633.2 39,632.4 40,631.4 41,630.5 42,629.6 43,628.6 44,627.6 45,626.7 46,625.7 47,624.7 48,623.8 49,622.9 50,622.0 51,621.1 52,620.3 53,619.5 54,618.7 55,618.0 56,617.3 57,616.7 58,616.2 59,615.7 60,615.2 61,614.9 62,614.6 63,614.3 64,614.1 65,614.0 66,614.0 67,614.0 68,614.1 69,614.3 70,614.6 71,614.9 72,615.2 73,615.7 74,616.2 75,616.7 76,617.3 77,618.0 78,618.7 79,619.5 80,620.3 81,621.1 82,622.0 83,622.9 84,623.8 85,624.7 86,625.7 87,626.7 88,627.6 89,628.6 90,629.6 91,630.5 92,631.4 93,632.4 94,633.2 95,634.1 96,634.9 97,635.7 98,636.5 99,637.2 100,637.8 101,638.4 102,639.0 103,639.4 104,639.9 105,640.2 106,640.5 107,640.7 108,640.9 109,641.0 110,641.0 111,640.9 112,640.8 113,640.6 114,640.4 115,640.1 116,639.7 117,639.2 118,638.7 119,638.1 120,637.5 121,636.8 122,636.1 123,635.3 124,634.5 125,633.7 126,632.8 127,631.9 128,631.0 129,630.0 130,629.1 131,628.1 132,627.1 133,626.2 134,625.2 135,624.3 136,623.3 137,622.4 138,621.5 139,620.7 140,619.9 141,619.1 142,618.3 143,617.7 144,617.0 145,616.4 146,615.9 147,615.4 148,615.0 149,614.7 150,614.4 151,614.2 152,614.1 153,614.0 154,614.0 155,614.1 156,614.2 157,614.4 158,614.7 159,615.0 160,615.4 161,615.9 162,616.4 163,617.0 164,617.7 165,618.3 166,619.1 167,619.9 168,620.7 169,621.5 170,622.4 171,623.3 172,624.3 173,625.2 174,626.2 175,627.1 176,628.1 177,629.1 178,630.0 179,631.0 180,631.9 181,632.8 182,633.7 183,634.5 184,635.3 185,636.1 186,636.8 187,637.5 188,638.1 189,638.7 190,639.2 191,639.7 192,640.1 193,640.4 194,640.6 195,640.8 196,640.9 197,641.0 198,641.0 199,640.9 200,640.7 201,640.5 202,640.2 203,639.9 204,639.4 205,639.0 206,638.4 207,637.8 208,637.2 209,636.5 210,635.7 211,634.9 212,634.1 213,633.2 214,632.4 215,631.4 216,630.5 217,629.6 218,628.6 219,627.6 220,626.7 221,625.7 222,624.7 223,623.8 224,622.9 225,622.0 226,621.1 227,620.3 228,619.5 229,618.7 230,618.0 231,617.3 232,616.7 233,616.2 234,615.7 235,615.2 236,614.9 237,614.6 238,614.3 239,614.1 240,614.0 241,614.0 242,614.0 243,614.1 244,614.3 245,614.6 246,614.9 247,615.2 248,615.7 249,616.2 250,616.7 251,617.3 252,618.0 253,618.7 254,619.5 255,620.3 256,621.1 257,622.0 258,622.9 259,623.8 260,624.7 261,625.7 262,626.7 263,627.6 264,628.6 265,629.6 266,630.5 267,631.4 268,632.4 269,633.2 270,634.1 271,634.9 272,635.7 273,636.5 274,637.2 275,637.8 276,638.4 277,639.0 278,639.4 279,639.9 280,640.2 281,640.5 282,640.7 283,640.9 284,641.0 285,641.0 286,640.9 287,640.8 288,640.6 289,640.4 290,640.1 291,639.7 292,639.2 293,638.7 294,638.1 295,637.5 296,636.8 297,636.1 298,635.3 299,634.5 300,633.7 301,632.8 302,631.9 303,631.0 304,630.0 305,629.1 306,628.1 307,627.1 308,626.2 309,625.2 310,624.3 311,623.3 312,622.4 313,621.5 314,620.7 315,619.9 316,619.1 317,618.3 318,617.7 319,617.0 320,616.4 321,615.9 322,615.4 323,615.0 324,614.7 325,614.4 326,614.2 327,614.1 328,614.0 329,614.0 330,614.1 331,614.2 332,614.4 333,614.7 334,615.0 335,615.4 336,615.9 337,616.4 338,617.0 339,617.7 340,618.3 341,619.1 342,619.9 343,620.7 344,621.5 345,622.4 346,623.3 347,624.3 348,625.2 349,626.2 350,627.1 351,628.1 352,629.1 353,630.0 354,631.0 355,631.9 356,632.8 357,633.7 358,634.5 359,635.3 360,636.1 361,636.8 362,637.5 363,638.1 364,638.7 365,639.2 366,639.7 367,640.1 368,640.4 369,640.6 370,640.8 371,640.9 372,641.0 373,641.0 374,640.9 375,640.7 376,640.5 377,640.2 378,639.9 379,639.4 380,639.0 381,638.4 382,637.8 383,637.2 384,636.5 385,635.7 386,634.9 387,634.1 388,633.2 389,632.4 390,631.4 391,630.5 392,629.6 393,628.6 394,627.6 395,626.7 396,625.7 397,624.7 398,623.8 399,622.9 400,622.0 401,621.1 402,620.3 403,619.5 404,618.7 405,618.0 406,617.3 407,616.7 408,616.2 409,615.7 410,615.2 411,614.9 412,614.6 413,614.3 414,614.1 415,614.0 416,614.0 417,614.0 418,614.1 419,614.3 420,614.6 421,614.9 422,615.2 423,615.7 424,616.2 425,616.7 426,617.3 427,618.0 428,618.7 429,619.5 430,620.3 431,621.1 432,622.0 433,622.9 434,623.8 435,624.7 436,625.7 437,626.7 438,627.6 439,628.6 440,629.6 441,630.5 442,631.4 443,632.4 444,633.2 445,634.1 446,634.9 447,635.7 448,636.5 449,637.2 450,637.8 451,638.4 452,639.0 453,639.4 454,639.9 455,640.2 456,640.5 457,640.7 458,640.9 459,641.0 460,641.0 461,640.9 462,640.8 463,640.6 464,640.4 465,640.1 466,639.7 467,639.2 468,638.7 469,638.1 470,637.5 471,636.8 472,636.1 473,635.3 474,634.5 475,633.7 476,632.8 477,631.9 478,631.0 479,630.0 480,629.1 481,628.1 482,627.1 483,626.2 484,625.2 485,624.3 486,623.3 487,622.4 488,621.5 489,620.7 490,619.9 491,619.1 492,618.3 493,617.7 494,617.0 495,616.4 496,615.9 497,615.4 498,615.0 499,614.7 500,614.4 501,614.2 502,614.1 503,614.0 504,614.0 505,614.1 506,614.2 507,614.4 508,614.7 509,615.0 510,615.4 511,615.9 512,616.4 513,617.0 514,617.7 515,618.3 516,619.1 517,619.9 518,620.7 519,621.5 520,622.4 521,623.3 522,624.3 523,625.2 524,626.2 525,627.1 526,628.1 527,629.1 528,630.0 529,631.0 530,631.9 531,632.8 532,633.7 533,634.5 534,635.3 535,636.1 536,636.8 537,637.5 538,638.1 539,638.7 540,639.2 541,639.7 542,640.1 543,640.4 544,640.6 545,640.8 546,640.9 547,641.0 548,641.0 549,640.9 550,640.7 551,640.5 552,640.2 553,639.9 554,639.4 555,639.0 556,638.4 557,637.8 558,637.2 559,636.5 560,635.7 561,634.9 562,634.1 563,633.2 564,632.4 565,631.4 566,630.5 567,629.6 568,628.6 569,627.6 570,626.7 571,625.7 572,624.7 573,623.8 574,622.9 575,622.0 576,621.1 577,620.3 578,619.5 579,618.7 580,618.0 581,617.3 582,616.7 583,616.2 584,615.7 585,615.2 586,614.9 587,614.6 588,614.3 589,614.1 590,614.0 591,614.0 592,614.0 593,614.1 594,614.3 595,614.6 596,614.9 597,615.2 598,615.7 599,616.2 600,616.7 601,617.3 602,618.0 603,618.7 604,619.5 605,620.3 606,621.1 607,622.0 608,622.9 609,623.8 610,624.7 611,625.7 612,626.7 613,627.6 614,628.6 615,629.6 616,630.5 617,631.4 618,632.4 619,633.2 620,634.1 621,634.9 622,635.7 623,636.5 624,637.2 625,637.8 626,638.4 627,639.0 628,639.4 629,639.9 630,640.2 631,640.5 632,640.7 633,640.9 634,641.0 635,641.0 636,640.9 637,640.8 638,640.6 639,640.4 640,640.1 641,639.7 642,639.2 643,638.7 644,638.1 645,637.5 646,636.8 647,636.1 648,635.3 649,634.5 650,633.7 651,632.8 652,631.9 653,631.0 654,630.0 655,629.1 656,628.1 657,627.1 658,626.2 659,625.2 660,624.3 661,623.3 662,622.4 663,621.5 664,620.7 665,619.9 666,619.1 667,618.3 668,617.7 669,617.0 670,616.4 671,615.9 672,615.4 673,615.0 674,614.7 675,614.4 676,614.2 677,614.1 678,614.0 679,614.0 680,614.1 681,614.2 682,614.4 683,614.7 684,615.0 685,615.4 686,615.9 687,616.4 688,617.0 689,617.7 690,618.3 691,619.1 692,619.9 693,620.7 694,621.5 695,622.4 696,623.3 697,624.3 698,625.2 699,626.2 700,627.1 701,628.1 702,629.1 703,630.0 704,631.0 705,631.9 706,632.8 707,633.7 708,634.5 709,635.3 710,636.1 711,636.8 712,637.5 713,638.1 714,638.7 715,639.2 716,639.7 717,640.1 718,640.4 719,640.6 720,640.8 721,640.9 722,641.0 723,641.0 724,640.9 725,640.7 726,640.5 727,640.2 728,639.9 729,639.4 730,639.0 731,638.4 732,637.8 733,637.2 734,636.5 735,635.7 736,634.9 737,634.1 738,633.2 739,632.4 740,631.4 741,630.5 742,629.6 743,628.6 744,627.6 745,626.7 746,625.7 747,624.7 748,623.8 749,622.9 750,622.0 751,621.1 752,620.3 753,619.5 754,618.7 755,618.0 756,617.3 757,616.7 758,616.2 759,615.7 760,615.2 761,614.9 762,614.6 763,614.3 764,614.1 765,614.0 766,614.0 767,614.0 768,614.1 769,614.3 770,614.6 771,614.9 772,615.2 773,615.7 774,616.2 775,616.7 776,617.3 777,618.0 778,618.7 779,619.5 780,620.3 781,621.1 782,622.0 783,622.9 784,623.8 785,624.7 786,625.7 787,626.7 788,627.6 789,628.6 790,629.6 791,630.5 792,631.4 793,632.4 794,633.2 795,634.1 796,634.9 797,635.7 798,636.5 799,637.2 800,637.8 801,638.4 802,639.0 803,639.4 804,639.9 805,640.2 806,640.5 807,640.7 808,640.9 809,641.0 810,641.0 811,640.9 812,640.8 813,640.6 814,640.4 815,640.1 816,639.7 817,639.2 818,638.7 819,638.1 820,637.5 821,636.8 822,636.1 823,635.3 824,634.5 825,633.7 826,632.8 827,631.9 828,631.0 829,630.0 830,629.1 831,628.1 832,627.1 833,626.2 834,625.2 835,624.3 836,623.3 837,622.4 838,621.5 839,620.7 840,619.9 841,619.1 842,618.3 843,617.7 844,617.0 845,616.4 846,615.9 847,615.4 848,615.0 849,614.7 850,614.4 851,614.2 852,614.1 853,614.0 854,614.0 855,614.1 856,614.2 857,614.4 858,614.7 859,615.0 860,615.4 861,615.9 862,616.4 863,617.0 864,617.7 865,618.3 866,619.1 867,619.9 868,620.7 869,621.5 870,622.4 871,623.3 872,624.3 873,625.2 874,626.2 875,627.1 876,628.1 877,629.1 878,630.0 879,631.0 880,631.9 881,632.8 882,633.7 883,634.5 884,635.3 885,636.1 886,636.8 887,637.5 888,638.1 889,638.7 890,639.2 891,639.7 892,640.1 893,640.4 894,640.6 895,640.8 896,640.9 897,641.0 898,641.0 899,640.9 900,640.7 901,640.5 902,640.2 903,639.9 904,639.4 905,639.0 906,638.4 907,637.8 908,637.2 909,636.5 910,635.7 911,634.9 912,634.1 913,633.2 914,632.4 915,631.4 916,630.5 917,629.6 918,628.6 919,627.6 920,626.7 921,625.7 922,624.7 923,623.8 924,622.9 925,622.0 926,621.1 927,620.3 928,619.5 929,618.7 930,618.0 931,617.3 932,616.7 933,616.2 934,615.7 935,615.2 936,614.9 937,614.6 938,614.3 939,614.1 940,614.0 941,614.0 942,614.0 943,614.1 944,614.3 945,614.6 946,614.9 947,615.2 948,615.7 949,616.2 950,616.7 951,617.3 952,618.0 953,618.7 954,619.5 955,620.3 956,621.1 957,622.0 958,622.9 959,623.8 960,624.7 961,625.7 962,626.7 963,627.6 964,628.6 965,629.6 966,630.5 967,631.4 968,632.4 969,633.2 970,634.1 971,634.9 972,635.7 973,636.5 974,637.2 975,637.8 976,638.4 977,639.0 978,639.4 979,639.9 980,640.2 981,640.5 982,640.7 983,640.9 984,641.0 985,641.0 986,640.9 987,640.8 988,640.6 989,640.4 990,640.1 991,639.7" fill="none" stroke="#4A4AB8" stroke-width="1.1"/><line x1="23.5" y1="593" x2="23.5" y2="651" stroke="#1010F0" stroke-width="2"/></svg><div class="a" style="left:10px;top:657px;width:325px;height:110px;border:1px solid #D0CDBE;border-right-color:#fff;border-bottom-color:#fff;box-sizing:border-box;"></div><div class="a" style="left:12px;top:661px;width:321px;height:104px;border:1px solid #C5C2B2;box-sizing:border-box;box-shadow:inset 1px 1px 0 #fff;"></div><div class="a" style="left:16px;top:657px;width:45px;height:10px;background:#ECE9D8;"></div><div class="t" style="left:18.6px;top:656.99px;font-size:10.17px;line-height:10.17px;color:#000;font-weight:normal;transform:scaleX(0.885);transform-origin:0 0;">Horizontal</div><div class="a" style="left:17px;top:667px;width:310px;height:2px;background:#BCB9A9;border-radius:0 2px 2px 0;"></div><div class="a" style="left:32px;top:674px;width:283px;height:18px;background:#ECE9D8;border:2px solid #D2CFC0;border-top-color:#CAC7B7;border-left-color:#CAC7B7;border-radius:1px;box-sizing:border-box;"></div><div class="t" style="left:34.0px;top:676.53px;font-size:10px;line-height:10px;color:#000;font-weight:normal;">1 мкс/д</div><div class="a" style="left:32px;top:694px;width:283px;height:18px;background:#ECE9D8;border:2px solid #D2CFC0;border-top-color:#CAC7B7;border-left-color:#CAC7B7;border-radius:1px;box-sizing:border-box;"></div><div class="t" style="left:34.0px;top:696.74px;font-size:10px;line-height:10px;color:#000;font-weight:normal;">0 с</div><div class="a" style="left:13px;top:715px;width:319px;height:1px;background:#C5C2B2;"></div><div class="a" style="left:13px;top:716px;width:319px;height:1px;background:#fff;"></div><div class="a" style="left:66px;top:746px;width:265px;height:18px;background:#ECE9D8;border:2px solid #D2CFC0;border-top-color:#CAC7B7;border-left-color:#CAC7B7;border-radius:1px;box-sizing:border-box;"></div><div class="t" style="left:68.0px;top:749.17px;font-size:9.6px;line-height:9.6px;color:#000;font-weight:normal;">-5 мкс</div><div class="t" style="left:23.5px;top:749.20px;font-size:10.51px;line-height:10.51px;color:#000;font-weight:normal;transform:scaleX(0.885);transform-origin:0 0;">Курсор 1</div><div class="a" style="left:313px;top:747px;width:17px;height:16px;background:#F3F2EC;border:1px solid #fff;border-right-color:#ACA899;border-bottom-color:#ACA899;box-sizing:border-box;"></div><svg class="a" style="left:317px;top:752px" width="9" height="6"><path d="M1 1 H8 L4.5 5 Z" fill="#000"/></svg><div class="a" style="left:119px;top:717px;width:27px;height:25px;background:#F5F4EF;border-top:1px solid #E0DED4;border-left:1px solid #E0DED4;box-sizing:border-box;"></div><div class="a" style="left:335px;top:657px;width:2px;height:110px;background:#BCB9A9;"></div><div class="a" style="left:337px;top:657px;width:1px;height:110px;background:#fff;"></div><div class="a" style="left:338px;top:657px;width:112px;height:110px;border:1px solid #D0CDBE;border-right:none;border-bottom-color:#fff;box-sizing:border-box;"></div><div class="a" style="left:340px;top:661px;width:110px;height:104px;border:1px solid #C5C2B2;border-right:none;box-sizing:border-box;box-shadow:inset 1px 1px 0 #fff;"></div><div class="a" style="left:344px;top:657px;width:40px;height:10px;background:#ECE9D8;"></div><div class="t" style="left:345.8px;top:656.89px;font-size:10.17px;line-height:10.17px;color:#000;font-weight:normal;transform:scaleX(0.885);transform-origin:0 0;">Vertical 1</div><svg class="a" style="left:346px;top:667px" width="104" height="4"><path d="M0 0.5 H104 V3.5 H2 Z" fill="#800000"/></svg><div class="a" style="left:359px;top:674px;width:91px;height:18px;background:#ECE9D8;border:2px solid #D2CFC0;border-top-color:#CAC7B7;border-left-color:#CAC7B7;border-radius:1px;box-sizing:border-box;"></div><div class="t" style="left:361.5px;top:676.70px;font-size:9.8px;line-height:9.8px;color:#000;font-weight:normal;">500 мВ/д</div><div class="a" style="left:359px;top:694px;width:91px;height:18px;background:#ECE9D8;border:2px solid #D2CFC0;border-top-color:#CAC7B7;border-left-color:#CAC7B7;border-radius:1px;box-sizing:border-box;"></div><div class="t" style="left:361.5px;top:697.20px;font-size:9.8px;line-height:9.8px;color:#000;font-weight:normal;">0 В</div><div class="a" style="left:341px;top:715px;width:109px;height:1px;background:#C5C2B2;"></div><div class="a" style="left:341px;top:716px;width:109px;height:1px;background:#fff;"></div><div class="t" style="left:351.0px;top:749.85px;font-size:10.51px;line-height:10.51px;color:#000;font-weight:normal;transform:scaleX(0.885);transform-origin:0 0;">Курсор 1</div><div class="a" style="left:393px;top:746px;width:57px;height:18px;background:#ECE9D8;border:2px solid #D2CFC0;border-top-color:#CAC7B7;border-left-color:#CAC7B7;border-radius:1px;box-sizing:border-box;"></div><div class="t" style="left:395.5px;top:748.60px;font-size:10.51px;line-height:10.51px;color:#000;font-weight:normal;transform:scaleX(0.885);transform-origin:0 0;">-1,9142 В</div><div class="a" style="left:9px;top:768px;width:984px;height:1px;background:#fff;"></div><div class="a" style="left:14px;top:774px;width:976px;height:7px;background:#fff;border-top:1px solid #8A8676;border-left:1px solid #8A8676;box-sizing:border-box;"></div><div class="a" style="left:28px;top:776px;width:962px;height:3px;background:#2E64D0;"></div><div class="a" style="left:9px;top:787px;width:984px;height:13px;background:#ECE9D8;"></div><div class="a" style="left:10px;top:788px;width:23px;height:12px;border-top:1px solid #fff;border-left:1px solid #fff;border-right:1px solid #ACA899;box-sizing:border-box;"></div><div class="a" style="left:35px;top:788px;width:21px;height:12px;border-top:1px solid #fff;border-left:1px solid #fff;border-right:1px solid #D6D3C4;box-sizing:border-box;"></div><div class="t" style="left:38.0px;top:789.60px;font-size:10.51px;line-height:10.51px;color:#FBFBF8;font-weight:normal;transform:scaleX(0.885);transform-origin:0 0;">A ^</div><div class="a" style="left:57px;top:788px;width:20px;height:12px;border-top:1px solid #fff;border-left:1px solid #fff;border-right:1px solid #D6D3C4;box-sizing:border-box;"></div><div class="t" style="left:60.0px;top:789.60px;font-size:10.51px;line-height:10.51px;color:#FBFBF8;font-weight:normal;transform:scaleX(0.885);transform-origin:0 0;">A v</div><div class="a" style="left:77px;top:788px;width:20px;height:12px;border-top:1px solid #fff;border-left:1px solid #fff;border-right:1px solid #D6D3C4;box-sizing:border-box;"></div><div class="t" style="left:80.0px;top:789.60px;font-size:10.51px;line-height:10.51px;color:#FBFBF8;font-weight:normal;transform:scaleX(0.885);transform-origin:0 0;">B ^</div><div class="a" style="left:98px;top:788px;width:20px;height:12px;border-top:1px solid #fff;border-left:1px solid #fff;border-right:1px solid #D6D3C4;box-sizing:border-box;"></div><div class="t" style="left:101.0px;top:789.60px;font-size:10.51px;line-height:10.51px;color:#FBFBF8;font-weight:normal;transform:scaleX(0.885);transform-origin:0 0;">B v</div><svg class="a" style="left:14px;top:789px" width="16" height="12" viewBox="0 0 16 12"><path d="M2 11 L4 6 H11 L13 11 Z" fill="#A0A0A0"/><path d="M5 6 L10 1 L13 4 L9 8" fill="#E8E8E8" stroke="#909090" stroke-width="0.8"/></svg><div class="a" style="left:120px;top:788px;width:873px;height:12px;border-top:1px solid #D6D3C4;border-left:1px solid #D6D3C4;box-sizing:border-box;"></div><div class="a" style="left:444px;top:357px;width:547px;height:441px;background:#0A3FD0;border-radius:7px 7px 0 0;"></div><div class="a" style="left:444px;top:357px;width:547px;height:25px;background:linear-gradient(to bottom,#0A50E0 0px,#3D8EFF 1.5px,#2A7AF8 3px,#0A5CEA 6px,#0056E4 12px,#005EEE 16px,#0066F8 19px,#0064F4 22px,#0050DC 23.5px,#0040C0 25px);border-radius:7px 7px 0 0;"></div><div class="a" style="left:444px;top:382px;width:3px;height:416px;background:linear-gradient(to right,#0A46D8,#0A3AC0);"></div><div class="a" style="left:988px;top:382px;width:3px;height:416px;background:linear-gradient(to right,#0A3AC0,#0025A8);"></div><div class="a" style="left:444px;top:795px;width:547px;height:3px;background:#0A30B8;"></div><div class="a" style="left:447px;top:794px;width:541px;height:1px;background:#8A8878;"></div><div class="a" style="left:447px;top:382px;width:541px;height:412px;background:#ECE9D8;"></div><svg class="a" style="left:448px;top:362px" width="16" height="16" viewBox="0 0 16 16"><path d="M1.5 4.5 L9.5 1.5 L11 9 L3 12 Z" fill="#4A98E0" stroke="#A8D8F0" stroke-width="1"/><path d="M3.5 8 L5 4.5 L6.5 7.5 L8 3.5 L9 6.5" stroke="#F06040" stroke-width="1.2" fill="none"/><path d="M1 11 L4 13" stroke="#303848" stroke-width="1.5"/><path d="M7.5 10.5 L13 13.5 L7.5 15.5 Z" fill="#E02828"/><circle cx="9" cy="13.2" r="0.9" fill="#4080F0"/></svg><div class="t" style="left:465.5px;top:365.48px;font-size:11.6px;line-height:11.6px;color:#fff;font-weight:normal;text-shadow:0.5px 0 0 #fff, 1px 1px 0 #0A2AA0;">Модуль анализа</div><div class="a" style="left:969px;top:361px;width:18px;height:18px;background:linear-gradient(135deg,#F09A7A 0%,#E2643C 40%,#D04818 100%);border:1px solid #fff;border-radius:3px;box-sizing:border-box;"></div><svg class="a" style="left:969px;top:361px" width="18" height="18"><path d="M5 5 L13 13 M13 5 L5 13" stroke="#fff" stroke-width="1.8"/></svg><div class="a" style="left:447px;top:382px;width:470px;height:27px;border-top:1px solid #fff;border-right:1px solid #ACA899;border-bottom:1px solid #ACA899;box-sizing:border-box;"></div><div class="a" style="left:917px;top:382px;width:71px;height:27px;border-top:1px solid #fff;border-left:1px solid #fff;border-bottom:1px solid #ACA899;box-sizing:border-box;"></div><div class="a" style="left:447px;top:409px;width:541px;height:1px;background:#fff;"></div><div class="a" style="left:924px;top:388px;width:15px;height:15px;border:2px solid #A8A8A0;border-radius:1px;box-sizing:border-box;"></div><div class="a" style="left:945px;top:388px;width:15px;height:15px;border:2px solid #A8A8A0;border-radius:1px;box-sizing:border-box;"></div><div class="a" style="left:967px;top:388px;width:15px;height:15px;border:2px solid #A8A8A0;border-radius:1px;box-sizing:border-box;"></div><svg class="a" style="left:924px;top:388px" width="58" height="15"><path d="M8 3 V11 M8 4 L4 10 H8 Z M9 5 L11 10 H9 Z" stroke="#B0B0B0" fill="#D8D8D8" stroke-width="0.8"/><path d="M4 11.5 H12" stroke="#B0B0B0" stroke-width="1"/><rect x="25" y="10" width="6" height="2" fill="#000"/><path d="M46 4 L53 11 M53 4 L46 11" stroke="#000" stroke-width="1.1"/></svg><div class="a" style="left:449px;top:413px;width:537px;height:15px;background:#ECE9D8;"></div><div class="a" style="left:535px;top:414px;width:1px;height:14px;background:#8A8878;"></div><div class="a" style="left:536px;top:414px;width:1px;height:14px;background:#fff;"></div><div class="a" style="left:613px;top:414px;width:1px;height:14px;background:#8A8878;"></div><div class="a" style="left:614px;top:414px;width:1px;height:14px;background:#fff;"></div><div class="a" style="left:713px;top:414px;width:1px;height:14px;background:#8A8878;"></div><div class="a" style="left:714px;top:414px;width:1px;height:14px;background:#fff;"></div><div class="a" style="left:797px;top:414px;width:1px;height:14px;background:#8A8878;"></div><div class="a" style="left:798px;top:414px;width:1px;height:14px;background:#fff;"></div><div class="a" style="left:881px;top:414px;width:1px;height:14px;background:#8A8878;"></div><div class="a" style="left:882px;top:414px;width:1px;height:14px;background:#fff;"></div><div class="a" style="left:449px;top:413px;width:537px;height:1px;background:#fff;"></div><div class="a" style="left:985px;top:413px;width:1px;height:15px;background:#716F64;"></div><div class="a" style="left:536px;top:429px;width:1px;height:16px;background:#8A8878;"></div><div class="a" style="left:537px;top:429px;width:1px;height:16px;background:#fff;"></div><div class="a" style="left:610px;top:429px;width:1px;height:16px;background:#8A8878;"></div><div class="a" style="left:611px;top:429px;width:1px;height:16px;background:#fff;"></div><div class="a" style="left:669px;top:429px;width:1px;height:16px;background:#8A8878;"></div><div class="a" style="left:670px;top:429px;width:1px;height:16px;background:#fff;"></div><div class="a" style="left:754px;top:429px;width:1px;height:16px;background:#8A8878;"></div><div class="a" style="left:755px;top:429px;width:1px;height:16px;background:#fff;"></div><div class="a" style="left:840px;top:429px;width:1px;height:16px;background:#8A8878;"></div><div class="a" style="left:841px;top:429px;width:1px;height:16px;background:#fff;"></div><div class="a" style="left:919px;top:429px;width:1px;height:16px;background:#8A8878;"></div><div class="a" style="left:920px;top:429px;width:1px;height:16px;background:#fff;"></div><div class="a" style="left:448px;top:428px;width:538px;height:1px;background:#fff;"></div><div class="a" style="left:985px;top:428px;width:1px;height:17px;background:#716F64;"></div><div class="a" style="left:448px;top:428px;width:1px;height:18px;background:#fff;"></div><div class="a" style="left:537px;top:445px;width:449px;height:1px;background:#fff;"></div><div class="a" style="left:537px;top:444px;width:449px;height:1px;background:#C8C5B5;"></div><div class="t" style="left:480.0px;top:415.90px;font-size:10.51px;line-height:10.51px;color:#000;font-weight:normal;transform:scaleX(0.885);transform-origin:0 0;">Эмуляция</div><div class="t" style="left:568.0px;top:415.90px;font-size:10.51px;line-height:10.51px;color:#000;font-weight:normal;transform:scaleX(0.885);transform-origin:0 0;">Шаблон</div><div class="t" style="left:646.7px;top:415.90px;font-size:10.51px;line-height:10.51px;color:#000;font-weight:normal;transform:scaleX(0.885);transform-origin:0 0;">Фильтрация</div><div class="t" style="left:745.0px;top:415.90px;font-size:10.51px;line-height:10.51px;color:#000;font-weight:normal;transform:scaleX(0.885);transform-origin:0 0;">Эффекты</div><div class="t" style="left:831.0px;top:415.90px;font-size:10.51px;line-height:10.51px;color:#000;font-weight:normal;transform:scaleX(0.885);transform-origin:0 0;">Функция</div><div class="t" style="left:913.6px;top:415.90px;font-size:10.51px;line-height:10.51px;color:#000;font-weight:normal;transform:scaleX(0.885);transform-origin:0 0;">Сигнализация</div><div class="t" style="left:477.0px;top:430.80px;font-size:10.51px;line-height:10.51px;color:#000;font-weight:normal;transform:scaleX(0.885);transform-origin:0 0;">Измерения</div><div class="t" style="left:563.6px;top:432.20px;font-size:10.51px;line-height:10.51px;color:#000;font-weight:normal;transform:scaleX(0.885);transform-origin:0 0;">Импульс</div><div class="t" style="left:639.4px;top:432.20px;font-size:10.51px;line-height:10.51px;color:#000;font-weight:normal;transform:scaleX(0.885);transform-origin:0 0;">БПФ</div><div class="t" style="left:699.0px;top:432.20px;font-size:10.51px;line-height:10.51px;color:#000;font-weight:normal;transform:scaleX(0.885);transform-origin:0 0;">Протоколы</div><div class="t" style="left:783.4px;top:432.20px;font-size:10.51px;line-height:10.51px;color:#000;font-weight:normal;transform:scaleX(0.885);transform-origin:0 0;">Статистика</div><div class="t" style="left:869.5px;top:432.20px;font-size:10.51px;line-height:10.51px;color:#000;font-weight:normal;transform:scaleX(0.885);transform-origin:0 0;">Формулы</div><div class="t" style="left:947.5px;top:432.20px;font-size:10.51px;line-height:10.51px;color:#000;font-weight:normal;transform:scaleX(0.885);transform-origin:0 0;">Сводка</div><div class="a" style="left:450px;top:453px;width:529px;height:103px;border:1px solid #D0D0BF;border-radius:0;box-sizing:border-box;"></div><div class="a" style="left:451px;top:454px;width:529px;height:103px;border:1px solid #fff;border-top-color:#fff;box-sizing:border-box;pointer-events:none;z-index:0;"></div><div class="a" style="left:455px;top:450.5px;width:54px;height:10.0px;background:#ECE9D8;"></div><div class="t" style="left:457.0px;top:449.60px;font-size:10.51px;line-height:10.51px;color:#000;font-weight:normal;transform:scaleX(0.885);transform-origin:0 0;">Вольтметр:</div><div class="t" style="left:461.0px;top:466.70px;font-size:10.51px;line-height:10.51px;color:#000;font-weight:normal;transform:scaleX(0.885);transform-origin:0 0;">Метод использования:</div><div class="a" style="left:567px;top:463px;width:275px;height:18px;background:#fff;border:2px solid #CBC8B8;border-top-color:#C3C0B0;box-sizing:border-box;"></div><div class="a" style="left:825px;top:465px;width:15px;height:14px;background:#ECE9D8;border-right:1px solid #C8C5B5;border-bottom:1px solid #C8C5B5;box-sizing:border-box;"></div><svg class="a" style="left:829px;top:470px" width="9" height="5"><path d="M0.5 0.5 H8 L4.25 4.5 Z" fill="#000"/></svg><div class="t" style="left:570.2px;top:466.70px;font-size:10.51px;line-height:10.51px;color:#000;font-weight:normal;transform:scaleX(0.885);transform-origin:0 0;">Не использовать цифровой вольтметр</div><div class="t" style="left:491.8px;top:487.10px;font-size:10.51px;line-height:10.51px;color:#000;font-weight:normal;transform:scaleX(0.885);transform-origin:0 0;">СКЗ:</div><div class="t" style="left:642.0px;top:487.10px;font-size:10.51px;line-height:10.51px;color:#000;font-weight:normal;transform:scaleX(0.885);transform-origin:0 0;">Амплитуда:</div><div class="t" style="left:793.6px;top:487.10px;font-size:10.51px;line-height:10.51px;color:#000;font-weight:normal;transform:scaleX(0.885);transform-origin:0 0;">Среднее:</div><div class="a" style="left:464px;top:499px;width:488px;height:25px;border-top:2px solid #C8C5B5;border-left:2px solid #C8C5B5;border-bottom:1px solid #fff;border-right:1px solid #fff;box-sizing:border-box;"></div><div class="t" style="left:478.5px;top:504.90px;font-size:9.8px;line-height:9.8px;color:#000;font-weight:normal;">1</div><div class="a" style="left:491px;top:501px;width:137px;height:21px;background:#fff;border:2px solid #CDCABA;border-top-color:#C5C2B2;border-left-color:#C5C2B2;box-sizing:border-box;"></div><svg class="a" style="left:496.4px;top:510px" width="22" height="3"><path d="M0.2 1.5 H4.8 M8.1 1.5 H12.7 M16 1.5 H20.6" stroke="#3A3A3A" stroke-width="1.5"/></svg><div class="a" style="left:642px;top:501px;width:138px;height:21px;background:#fff;border:2px solid #CDCABA;border-top-color:#C5C2B2;border-left-color:#C5C2B2;box-sizing:border-box;"></div><svg class="a" style="left:647.0px;top:510px" width="22" height="3"><path d="M0.2 1.5 H4.8 M8.1 1.5 H12.7 M16 1.5 H20.6" stroke="#3A3A3A" stroke-width="1.5"/></svg><div class="a" style="left:793px;top:501px;width:137px;height:21px;background:#fff;border:2px solid #CDCABA;border-top-color:#C5C2B2;border-left-color:#C5C2B2;box-sizing:border-box;"></div><svg class="a" style="left:798.0px;top:510px" width="22" height="3"><path d="M0.2 1.5 H4.8 M8.1 1.5 H12.7 M16 1.5 H20.6" stroke="#3A3A3A" stroke-width="1.5"/></svg><div class="a" style="left:464px;top:527px;width:488px;height:25px;border-top:2px solid #C8C5B5;border-left:2px solid #C8C5B5;border-bottom:1px solid #fff;border-right:1px solid #fff;box-sizing:border-box;"></div><div class="t" style="left:478.5px;top:532.90px;font-size:9.8px;line-height:9.8px;color:#000;font-weight:normal;">2</div><div class="a" style="left:491px;top:529px;width:137px;height:21px;background:#fff;border:2px solid #CDCABA;border-top-color:#C5C2B2;border-left-color:#C5C2B2;box-sizing:border-box;"></div><svg class="a" style="left:496.4px;top:538px" width="22" height="3"><path d="M0.2 1.5 H4.8 M8.1 1.5 H12.7 M16 1.5 H20.6" stroke="#3A3A3A" stroke-width="1.5"/></svg><div class="a" style="left:642px;top:529px;width:138px;height:21px;background:#fff;border:2px solid #CDCABA;border-top-color:#C5C2B2;border-left-color:#C5C2B2;box-sizing:border-box;"></div><svg class="a" style="left:647.0px;top:538px" width="22" height="3"><path d="M0.2 1.5 H4.8 M8.1 1.5 H12.7 M16 1.5 H20.6" stroke="#3A3A3A" stroke-width="1.5"/></svg><div class="a" style="left:793px;top:529px;width:137px;height:21px;background:#fff;border:2px solid #CDCABA;border-top-color:#C5C2B2;border-left-color:#C5C2B2;box-sizing:border-box;"></div><svg class="a" style="left:798.0px;top:538px" width="22" height="3"><path d="M0.2 1.5 H4.8 M8.1 1.5 H12.7 M16 1.5 H20.6" stroke="#3A3A3A" stroke-width="1.5"/></svg><div class="a" style="left:450px;top:562px;width:529px;height:55px;border:1px solid #D0D0BF;border-radius:0;box-sizing:border-box;"></div><div class="a" style="left:451px;top:563px;width:529px;height:55px;border:1px solid #fff;border-top-color:#fff;box-sizing:border-box;pointer-events:none;z-index:0;"></div><div class="a" style="left:456px;top:560.2px;width:59px;height:10.0px;background:#ECE9D8;"></div><div class="t" style="left:458.0px;top:559.30px;font-size:10.51px;line-height:10.51px;color:#000;font-weight:normal;transform:scaleX(0.885);transform-origin:0 0;">Частотомер:</div><div class="a" style="left:457px;top:578px;width:96px;height:28px;border:1px solid #D0D0BF;border-radius:0;box-sizing:border-box;"></div><div class="a" style="left:458px;top:579px;width:96px;height:28px;border:1px solid #fff;border-top-color:#fff;box-sizing:border-box;pointer-events:none;z-index:0;"></div><div class="a" style="left:462.6px;top:575px;width:33.0px;height:10px;background:#ECE9D8;"></div><div class="t" style="left:464.6px;top:574.10px;font-size:10.51px;line-height:10.51px;color:#000;font-weight:normal;transform:scaleX(0.885);transform-origin:0 0;">Канал:</div><svg class="a" style="left:462px;top:588px" width="60" height="14"><circle cx="7.5" cy="7" r="5" fill="#fff" stroke="#A4B4C4" stroke-width="1"/><circle cx="7.5" cy="7" r="2" fill="#202020"/><circle cx="51.5" cy="7" r="5" fill="#fff" stroke="#C8D0D8" stroke-width="1"/></svg><div class="t" style="left:481.0px;top:590.53px;font-size:10px;line-height:10px;color:#000;font-weight:normal;">1</div><div class="t" style="left:523.4px;top:590.53px;font-size:10px;line-height:10px;color:#000;font-weight:normal;">2</div><div class="a" style="left:567px;top:574px;width:11px;height:11px;background:#fff;border:1px solid #C5C2B2;border-top-color:#B5B2A2;border-left-color:#B5B2A2;box-sizing:border-box;"></div><svg class="a" style="left:567px;top:574px" width="11" height="11"><path d="M2.5 5 L4.5 7.5 L8.5 2.5" stroke="#000" stroke-width="1.8" fill="none"/></svg><div class="t" style="left:582.0px;top:573.50px;font-size:10.51px;line-height:10.51px;color:#000;font-weight:normal;transform:scaleX(0.885);transform-origin:0 0;">Аппаратный метод:</div><div class="a" style="left:760px;top:574px;width:11px;height:11px;background:#fff;border:1px solid #C5C2B2;border-top-color:#B5B2A2;border-left-color:#B5B2A2;box-sizing:border-box;"></div><svg class="a" style="left:760px;top:574px" width="11" height="11"><path d="M2.5 5 L4.5 7.5 L8.5 2.5" stroke="#000" stroke-width="1.8" fill="none"/></svg><div class="t" style="left:774.4px;top:573.50px;font-size:10.51px;line-height:10.51px;color:#000;font-weight:normal;transform:scaleX(0.885);transform-origin:0 0;">Программный метод:</div><div class="a" style="left:567px;top:592px;width:172px;height:21px;background:#fff;border:2px solid #CDCABA;border-top-color:#C5C2B2;border-left-color:#C5C2B2;box-sizing:border-box;"></div><div class="t" style="left:569.4px;top:595.97px;font-size:13.5px;line-height:13.5px;color:#000;font-weight:normal;">1 МГц</div><div class="a" style="left:760px;top:592px;width:171px;height:21px;background:#fff;border:2px solid #CDCABA;border-top-color:#C5C2B2;border-left-color:#C5C2B2;box-sizing:border-box;"></div><div class="t" style="left:762.4px;top:595.97px;font-size:13.5px;line-height:13.5px;color:#000;font-weight:normal;">1 МГц</div><div class="a" style="left:450px;top:625px;width:261px;height:64px;border:1px solid #D0D0BF;border-radius:0;box-sizing:border-box;"></div><div class="a" style="left:451px;top:626px;width:261px;height:64px;border:1px solid #fff;border-top-color:#fff;box-sizing:border-box;pointer-events:none;z-index:0;"></div><div class="a" style="left:456px;top:620.5px;width:74px;height:10.0px;background:#ECE9D8;"></div><div class="t" style="left:458.0px;top:619.60px;font-size:10.51px;line-height:10.51px;color:#000;font-weight:normal;transform:scaleX(0.885);transform-origin:0 0;">Фазовый сдвиг:</div><div class="t" style="left:471.0px;top:636.30px;font-size:10.51px;line-height:10.51px;color:#000;font-weight:normal;transform:scaleX(0.885);transform-origin:0 0;">Метод:</div><div class="a" style="left:520px;top:634px;width:185px;height:17px;background:#fff;border:2px solid #CBC8B8;border-top-color:#C3C0B0;box-sizing:border-box;"></div><div class="a" style="left:688px;top:636px;width:15px;height:13px;background:#ECE9D8;border-right:1px solid #C8C5B5;border-bottom:1px solid #C8C5B5;box-sizing:border-box;"></div><svg class="a" style="left:692px;top:640px" width="9" height="5"><path d="M0.5 0.5 H8 L4.25 4.5 Z" fill="#000"/></svg><div class="t" style="left:522.5px;top:636.50px;font-size:10.51px;line-height:10.51px;color:#000;font-weight:normal;transform:scaleX(0.885);transform-origin:0 0;">Спектральный метод</div><div class="a" style="left:457px;top:654px;width:56px;height:28px;background:#fff;border-top:1px solid #C8C5B5;border-left:1px solid #C8C5B5;box-sizing:border-box;"></div><svg class="a" style="left:0;top:0" width="1000" height="800"><polyline points="459.5,666.9 460.0,665.8 460.5,664.7 461.0,663.6 461.5,662.6 462.0,661.7 462.5,660.9 463.0,660.2 463.5,659.6 464.0,659.1 464.5,658.8 465.0,658.6 465.5,658.5 466.0,658.6 466.5,658.8 467.0,659.1 467.5,659.6 468.0,660.2 468.5,660.9 469.0,661.7 469.5,662.6 470.0,663.6 470.5,664.7 471.0,665.8 471.5,666.9 472.0,668.1 472.5,669.3 473.0,670.4 473.5,671.5 474.0,672.6 474.5,673.6 475.0,674.5 475.5,675.4 476.0,676.1 476.5,676.8 477.0,677.3 477.5,677.6 478.0,677.9 478.5,678.0 479.0,678.0 479.5,677.8 480.0,677.5 480.5,677.0 481.0,676.5 481.5,675.8 482.0,675.0 482.5,674.1 483.0,673.1 483.5,672.1 484.0,671.0 484.5,669.9 485.0,668.7 485.5,667.5 486.0,666.4 486.5,665.2 487.0,664.2 487.5,663.1 488.0,662.2 488.5,661.3 489.0,660.5 489.5,659.9 490.0,659.3 490.5,658.9 491.0,658.7 491.5,658.5 492.0,658.5 492.5,658.7 493.0,658.9 493.5,659.3 494.0,659.9 494.5,660.5 495.0,661.3 495.5,662.2 496.0,663.1 496.5,664.1 497.0,665.2 497.5,666.4 498.0,667.5 498.5,668.7 499.0,669.8 499.5,671.0 500.0,672.1 500.5,673.1 501.0,674.1 501.5,675.0 502.0,675.8 502.5,676.5 503.0,677.0 503.5,677.5 504.0,677.8 504.5,678.0 505.0,678.0" stroke="#B04848" stroke-width="1.5" fill="none"/><polyline points="466.2,665.2 466.8,664.2 467.2,663.1 467.8,662.2 468.2,661.3 468.8,660.5 469.2,659.9 469.8,659.3 470.2,658.9 470.8,658.7 471.2,658.5 471.8,658.5 472.2,658.7 472.8,658.9 473.2,659.3 473.8,659.9 474.2,660.5 474.8,661.3 475.2,662.2 475.8,663.1 476.2,664.1 476.8,665.2 477.2,666.4 477.8,667.5 478.2,668.7 478.8,669.8 479.2,671.0 479.8,672.1 480.2,673.1 480.8,674.1 481.2,675.0 481.8,675.8 482.2,676.5 482.8,677.0 483.2,677.5 483.8,677.8 484.2,678.0 484.8,678.0 485.2,677.9 485.8,677.7 486.2,677.3 486.8,676.8 487.2,676.1 487.8,675.4 488.2,674.6 488.8,673.6 489.2,672.6 489.8,671.5 490.2,670.4 490.8,669.3 491.2,668.1 491.8,666.9 492.2,665.8 492.8,664.7 493.2,663.6 493.8,662.6 494.2,661.7 494.8,660.9 495.2,660.2 495.8,659.6 496.2,659.1 496.8,658.8 497.2,658.6 497.8,658.5 498.2,658.6 498.8,658.8 499.2,659.1 499.8,659.6 500.2,660.2 500.8,660.9 501.2,661.7 501.8,662.6 502.2,663.6 502.8,664.7 503.2,665.8 503.8,666.9 504.2,668.1 504.8,669.3 505.2,670.4 505.8,671.5 506.2,672.6 506.8,673.6 507.2,674.5 507.8,675.4 508.2,676.1 508.8,676.8 509.2,677.3 509.8,677.6 510.2,677.9 510.8,678.0 511.2,678.0" stroke="#4858C0" stroke-width="1.5" fill="none"/></svg><div class="a" style="left:520px;top:660px;width:185px;height:21px;background:#fff;border:2px solid #CDCABA;border-top-color:#C5C2B2;border-left-color:#C5C2B2;box-sizing:border-box;"></div><div class="t" style="left:521.5px;top:663.87px;font-size:13.5px;line-height:13.5px;color:#303030;font-weight:normal;">89,521 °</div><div class="a" style="left:719px;top:625px;width:260px;height:64px;border:1px solid #D0D0BF;border-radius:0;box-sizing:border-box;"></div><div class="a" style="left:720px;top:626px;width:260px;height:64px;border:1px solid #fff;border-top-color:#fff;box-sizing:border-box;pointer-events:none;z-index:0;"></div><div class="a" style="left:723.5px;top:620.6px;width:48.0px;height:10.0px;background:#ECE9D8;"></div><div class="t" style="left:725.5px;top:619.70px;font-size:10.51px;line-height:10.51px;color:#000;font-weight:normal;transform:scaleX(0.885);transform-origin:0 0;">Задержка:</div><div class="t" style="left:738.4px;top:637.10px;font-size:10.51px;line-height:10.51px;color:#000;font-weight:normal;transform:scaleX(0.885);transform-origin:0 0;">Метод:</div><div class="a" style="left:786px;top:634px;width:187px;height:17px;background:#fff;border:2px solid #CBC8B8;border-top-color:#C3C0B0;box-sizing:border-box;"></div><div class="a" style="left:956px;top:636px;width:15px;height:13px;background:#ECE9D8;border-right:1px solid #C8C5B5;border-bottom:1px solid #C8C5B5;box-sizing:border-box;"></div><svg class="a" style="left:960px;top:640px" width="9" height="5"><path d="M0.5 0.5 H8 L4.25 4.5 Z" fill="#000"/></svg><div class="t" style="left:789.0px;top:636.70px;font-size:10.51px;line-height:10.51px;color:#000;font-weight:normal;transform:scaleX(0.885);transform-origin:0 0;">Не определять задержку</div><div class="a" style="left:725px;top:654px;width:55px;height:28px;border:1px solid #D0D0BF;border-right-color:#fff;border-bottom-color:#fff;box-sizing:border-box;"></div><div class="a" style="left:786px;top:660px;width:187px;height:21px;background:#fff;border:2px solid #CDCABA;border-top-color:#C5C2B2;border-left-color:#C5C2B2;box-sizing:border-box;"></div><svg class="a" style="left:791.0px;top:669.5px" width="22" height="3"><path d="M0.2 1.5 H4.8 M8.1 1.5 H12.7 M16 1.5 H20.6" stroke="#909090" stroke-width="1.5"/></svg><div class="a" style="left:450px;top:693px;width:529px;height:98px;border:1px solid #D0D0BF;border-radius:0;box-sizing:border-box;"></div><div class="a" style="left:451px;top:694px;width:529px;height:98px;border:1px solid #fff;border-top-color:#fff;box-sizing:border-box;pointer-events:none;z-index:0;"></div><div class="a" style="left:456px;top:688.8px;width:80px;height:10.0px;background:#ECE9D8;"></div><div class="t" style="left:458.0px;top:687.90px;font-size:10.51px;line-height:10.51px;color:#000;font-weight:normal;transform:scaleX(0.885);transform-origin:0 0;">Интегрирование:</div><div class="t" style="left:468.0px;top:705.30px;font-size:10.51px;line-height:10.51px;color:#000;font-weight:normal;transform:scaleX(0.885);transform-origin:0 0;">Тип функции:</div><div class="a" style="left:533px;top:704px;width:192px;height:16px;background:#fff;border:2px solid #CBC8B8;border-top-color:#C3C0B0;box-sizing:border-box;"></div><div class="a" style="left:708px;top:706px;width:15px;height:12px;background:#ECE9D8;border-right:1px solid #C8C5B5;border-bottom:1px solid #C8C5B5;box-sizing:border-box;"></div><svg class="a" style="left:712px;top:710px" width="9" height="5"><path d="M0.5 0.5 H8 L4.25 4.5 Z" fill="#000"/></svg><div class="a" style="left:535px;top:705px;width:103px;height:13px;background:#316AC5;"></div><div class="t" style="left:536.0px;top:705.70px;font-size:10.51px;line-height:10.51px;color:#fff;font-weight:normal;transform:scaleX(0.885);transform-origin:0 0;">Не вычислять интеграл</div><div class="a" style="left:458px;top:723px;width:274px;height:32px;border:1px solid #E83A3A;box-sizing:border-box;"></div><div class="t" style="left:470.8px;top:733.30px;font-size:10.51px;line-height:10.51px;color:#000;font-weight:normal;transform:scaleX(0.885);transform-origin:0 0;">Нулевой уровень А:</div><div class="a" style="left:560px;top:730px;width:70px;height:18px;background:#fff;border:2px solid #CDCABA;border-top-color:#C5C2B2;border-left-color:#C5C2B2;box-sizing:border-box;"></div><div class="a" style="left:614px;top:732px;width:14px;height:7px;background:#ECE9D8;border:1px solid #F8F7F2;border-right-color:#BAB7A7;border-bottom-color:#BAB7A7;box-sizing:border-box;"></div><div class="a" style="left:614px;top:739px;width:14px;height:7px;background:#ECE9D8;border:1px solid #F8F7F2;border-right-color:#BAB7A7;border-bottom-color:#BAB7A7;box-sizing:border-box;"></div><svg class="a" style="left:618px;top:733px" width="7" height="14"><path d="M1.5 4.5 H5.5 L3.5 2.5 Z M1.5 9 H5.5 L3.5 11 Z" fill="#000"/></svg><div class="t" style="left:563.0px;top:733.03px;font-size:10px;line-height:10px;color:#000;font-weight:normal;">1 В</div><div class="t" style="left:643.0px;top:733.30px;font-size:10.51px;line-height:10.51px;color:#000;font-weight:normal;transform:scaleX(0.885);transform-origin:0 0;">В:</div><div class="a" style="left:656px;top:730px;width:69px;height:18px;background:#fff;border:2px solid #CDCABA;border-top-color:#C5C2B2;border-left-color:#C5C2B2;box-sizing:border-box;"></div><div class="a" style="left:709px;top:732px;width:14px;height:7px;background:#ECE9D8;border:1px solid #F8F7F2;border-right-color:#BAB7A7;border-bottom-color:#BAB7A7;box-sizing:border-box;"></div><div class="a" style="left:709px;top:739px;width:14px;height:7px;background:#ECE9D8;border:1px solid #F8F7F2;border-right-color:#BAB7A7;border-bottom-color:#BAB7A7;box-sizing:border-box;"></div><svg class="a" style="left:713px;top:733px" width="7" height="14"><path d="M1.5 4.5 H5.5 L3.5 2.5 Z M1.5 9 H5.5 L3.5 11 Z" fill="#000"/></svg><div class="t" style="left:659.0px;top:733.03px;font-size:10px;line-height:10px;color:#000;font-weight:normal;">0 В</div><div class="t" style="left:746.0px;top:705.30px;font-size:10.51px;line-height:10.51px;color:#ACA899;font-weight:normal;transform:scaleX(0.885);transform-origin:0 0;">ka1</div><div class="t" style="left:746.0px;top:733.30px;font-size:10.51px;line-height:10.51px;color:#ACA899;font-weight:normal;transform:scaleX(0.885);transform-origin:0 0;">kb1</div><div class="t" style="left:863.0px;top:705.30px;font-size:10.51px;line-height:10.51px;color:#ACA899;font-weight:normal;transform:scaleX(0.885);transform-origin:0 0;">ka0</div><div class="t" style="left:863.0px;top:733.30px;font-size:10.51px;line-height:10.51px;color:#ACA899;font-weight:normal;transform:scaleX(0.885);transform-origin:0 0;">kb0</div><div class="a" style="left:767px;top:702px;width:82px;height:18px;background:#fff;border:2px solid #CDCABA;border-top-color:#C5C2B2;border-left-color:#C5C2B2;box-sizing:border-box;"></div><div class="a" style="left:833px;top:704px;width:14px;height:7px;background:#ECE9D8;border:1px solid #F8F7F2;border-right-color:#BAB7A7;border-bottom-color:#BAB7A7;box-sizing:border-box;"></div><div class="a" style="left:833px;top:711px;width:14px;height:7px;background:#ECE9D8;border:1px solid #F8F7F2;border-right-color:#BAB7A7;border-bottom-color:#BAB7A7;box-sizing:border-box;"></div><svg class="a" style="left:837px;top:705px" width="7" height="14"><path d="M1.5 4.5 H5.5 L3.5 2.5 Z M1.5 9 H5.5 L3.5 11 Z" fill="#000"/></svg><div class="t" style="left:770.0px;top:705.13px;font-size:10px;line-height:10px;color:#ACA899;font-weight:normal;">1</div><div class="a" style="left:767px;top:730px;width:82px;height:18px;background:#fff;border:2px solid #CDCABA;border-top-color:#C5C2B2;border-left-color:#C5C2B2;box-sizing:border-box;"></div><div class="a" style="left:833px;top:732px;width:14px;height:7px;background:#ECE9D8;border:1px solid #F8F7F2;border-right-color:#BAB7A7;border-bottom-color:#BAB7A7;box-sizing:border-box;"></div><div class="a" style="left:833px;top:739px;width:14px;height:7px;background:#ECE9D8;border:1px solid #F8F7F2;border-right-color:#BAB7A7;border-bottom-color:#BAB7A7;box-sizing:border-box;"></div><svg class="a" style="left:837px;top:733px" width="7" height="14"><path d="M1.5 4.5 H5.5 L3.5 2.5 Z M1.5 9 H5.5 L3.5 11 Z" fill="#000"/></svg><div class="t" style="left:770.0px;top:733.13px;font-size:10px;line-height:10px;color:#ACA899;font-weight:normal;">1</div><div class="a" style="left:882px;top:702px;width:84px;height:18px;background:#fff;border:2px solid #CDCABA;border-top-color:#C5C2B2;border-left-color:#C5C2B2;box-sizing:border-box;"></div><div class="a" style="left:950px;top:704px;width:14px;height:7px;background:#ECE9D8;border:1px solid #F8F7F2;border-right-color:#BAB7A7;border-bottom-color:#BAB7A7;box-sizing:border-box;"></div><div class="a" style="left:950px;top:711px;width:14px;height:7px;background:#ECE9D8;border:1px solid #F8F7F2;border-right-color:#BAB7A7;border-bottom-color:#BAB7A7;box-sizing:border-box;"></div><svg class="a" style="left:954px;top:705px" width="7" height="14"><path d="M1.5 4.5 H5.5 L3.5 2.5 Z M1.5 9 H5.5 L3.5 11 Z" fill="#000"/></svg><div class="t" style="left:885.0px;top:705.13px;font-size:10px;line-height:10px;color:#ACA899;font-weight:normal;">0</div><div class="a" style="left:882px;top:730px;width:84px;height:18px;background:#fff;border:2px solid #CDCABA;border-top-color:#C5C2B2;border-left-color:#C5C2B2;box-sizing:border-box;"></div><div class="a" style="left:950px;top:732px;width:14px;height:7px;background:#ECE9D8;border:1px solid #F8F7F2;border-right-color:#BAB7A7;border-bottom-color:#BAB7A7;box-sizing:border-box;"></div><div class="a" style="left:950px;top:739px;width:14px;height:7px;background:#ECE9D8;border:1px solid #F8F7F2;border-right-color:#BAB7A7;border-bottom-color:#BAB7A7;box-sizing:border-box;"></div><svg class="a" style="left:954px;top:733px" width="7" height="14"><path d="M1.5 4.5 H5.5 L3.5 2.5 Z M1.5 9 H5.5 L3.5 11 Z" fill="#000"/></svg><div class="t" style="left:885.0px;top:733.13px;font-size:10px;line-height:10px;color:#ACA899;font-weight:normal;">0</div><div class="a" style="left:471px;top:756px;width:487px;height:1px;background:#D0D0BF;"></div><div class="a" style="left:471px;top:757px;width:487px;height:1px;background:#fff;"></div><div class="t" style="left:467.4px;top:770.50px;font-size:10.51px;line-height:10.51px;color:#000;font-weight:normal;transform:scaleX(0.885);transform-origin:0 0;">Результат:</div><div class="a" style="left:520px;top:765px;width:110px;height:21px;background:#fff;border:2px solid #CDCABA;border-top-color:#C5C2B2;border-left-color:#C5C2B2;box-sizing:border-box;"></div><svg class="a" style="left:524.0px;top:774px" width="22" height="3"><path d="M0.2 1.5 H4.8 M8.1 1.5 H12.7 M16 1.5 H20.6" stroke="#3A3A3A" stroke-width="1.5"/></svg><div class="a" style="left:650px;top:770px;width:11px;height:11px;border:1px solid #C5C2B2;background:#fff;box-sizing:border-box;"></div><div class="a" style="left:664px;top:765px;width:61px;height:21px;border:1px solid #C5C2B2;box-sizing:border-box;"></div><div class="t" style="left:667.0px;top:769.50px;font-size:13px;line-height:13px;color:#C5C2B2;font-weight:normal;">Вт</div><div class="t" style="left:752.0px;top:767.70px;font-size:10.51px;line-height:10.51px;color:#000;font-weight:normal;transform:scaleX(0.885);transform-origin:0 0;">T0</div><div class="t" style="left:868.0px;top:767.70px;font-size:10.51px;line-height:10.51px;color:#000;font-weight:normal;transform:scaleX(0.885);transform-origin:0 0;">T1</div><div class="a" style="left:767px;top:765px;width:82px;height:17px;border:1px solid #B5B2A2;box-sizing:border-box;box-shadow:inset 1px 1px 0 #C8C5B5;"></div><div class="t" style="left:770.0px;top:766.87px;font-size:9.6px;line-height:9.6px;color:#000;font-weight:normal;">0 с</div><div class="a" style="left:882px;top:765px;width:84px;height:17px;border:1px solid #B5B2A2;box-sizing:border-box;box-shadow:inset 1px 1px 0 #C8C5B5;"></div><div class="t" style="left:885.0px;top:766.87px;font-size:9.6px;line-height:9.6px;color:#000;font-weight:normal;">0 с</div><svg class="a" style="left:13px;top:47px" width="16" height="16" viewBox="0 0 16 16"><path d="M8 1 H14 V14 H8 Z" fill="#1A1A1A"/><path d="M9 2 L13 3 V14 L9 13 Z" fill="#1AA0A0"/><path d="M1 5 H6 V3 L9.5 7 L6 11 V9 H1 Z" fill="#20D8E8" stroke="#0A6A8A" stroke-width="0.6"/><path d="M5 12 H14 L12 15 H6 Z" fill="#7A8A8A"/></svg><svg class="a" style="left:42px;top:47px" width="16" height="16" viewBox="0 0 16 16"><path d="M1 5 H6 L7 6 H13 V14 H1 Z" fill="#D8A820"/><path d="M2 8 H15 L13 14 H1 Z" fill="#F8D868" stroke="#C89818" stroke-width="0.6"/><path d="M10 1 L14 1 L14 5 M14 1 L9 6" stroke="#30B030" stroke-width="2" fill="none"/></svg><svg class="a" style="left:66px;top:47px" width="14" height="16" viewBox="0 0 14 16"><path d="M1 1 H13 V14 L12 15 H1 Z" fill="#6060D0"/><path d="M1 1 H3.5 V15 H1 Z" fill="#8080E0"/><rect x="4" y="1" width="6" height="5.5" fill="#D8D8DC"/><rect x="4" y="2" width="1.5" height="3" fill="#fff"/><rect x="4" y="9.5" width="5.5" height="5.5" fill="#E8E8F0"/><path d="M5.5 14.5 L7.5 10.5" stroke="#6060D0" stroke-width="1.3"/></svg><svg class="a" style="left:88px;top:47px" width="15" height="16" viewBox="0 0 15 16"><path d="M3 1 H8.5 L10 6 H4 Z" fill="#B8D8F4" stroke="#7A9AB8" stroke-width="0.6"/><path d="M8.5 1 L11 5" stroke="#303848" stroke-width="1"/><ellipse cx="7.5" cy="10" rx="6.3" ry="4" fill="#B8B8B8"/><ellipse cx="7" cy="9" rx="5" ry="2.2" fill="#D8D8D8"/><path d="M2 12 Q7.5 16 13 12 V13.5 Q7.5 17 2 13.5 Z" fill="#505050"/><circle cx="11.5" cy="9.5" r="0.7" fill="#30A030"/></svg><svg class="a" style="left:117px;top:47px" width="15" height="16" viewBox="0 0 15 16"><circle cx="10" cy="6" r="5" fill="#B0B0B0" stroke="#888" stroke-width="0.6"/><path d="M2 5 Q2 2 6 2 Q9 2 9 6 L10 8 L9 9 V13 H3 Q1 12 2 9 Z" fill="#F4C8A8" stroke="#101010" stroke-width="1.1"/><circle cx="6.5" cy="6" r="0.9" fill="#000"/></svg><svg class="a" style="left:139px;top:47px" width="15" height="16" viewBox="0 0 15 16"><circle cx="10" cy="6" r="5" fill="#B0B0B0" stroke="#888" stroke-width="0.6"/><path d="M2 5 Q2 2 6 2 Q9 2 9 6 L10 8 L9 9 V13 H3 Q1 12 2 9 Z" fill="#F4C8A8" stroke="#101010" stroke-width="1.1"/><circle cx="6.5" cy="6" r="0.9" fill="#000"/><rect x="7" y="12" width="8" height="3" fill="#D00000"/><rect x="7" y="11" width="8" height="1.2" fill="#F0C000"/></svg><svg class="a" style="left:162px;top:47px" width="15" height="16" viewBox="0 0 15 16"><path d="M1 3 Q3 0 5 3 T9 3 T13 3" stroke="#F03030" fill="none" stroke-width="1.2"/><path d="M1 6 Q3 3 5 6 T9 6 T13 6" stroke="#3050F0" fill="none" stroke-width="1.2"/><path d="M1 10 Q3 7 5 10 T9 10 T13 10" stroke="#20A020" fill="none" stroke-width="1.2"/><path d="M1 13 Q3 10 5 13 T9 13 T13 13" stroke="#F020F0" fill="none" stroke-width="1.2"/></svg><svg class="a" style="left:185px;top:47px" width="15" height="16" viewBox="0 0 15 16"><rect x="1" y="1" width="13" height="11" rx="1" fill="#202020"/><rect x="2.5" y="2.5" width="10" height="8" fill="#406040"/><circle cx="7" cy="8" r="3.5" fill="#C8E8F8"/><path d="M9 2 L12 4 L11 7" stroke="#30C030" stroke-width="1.5" fill="none"/><path d="M10 10 L13 14" stroke="#F08030" stroke-width="1.5"/><rect x="4" y="13" width="6" height="1.5" fill="#202020"/></svg><svg class="a" style="left:206px;top:47px" width="16" height="16" viewBox="0 0 16 16"><circle cx="8" cy="8" r="7" fill="#2A72D0" stroke="#1A50A8" stroke-width="0.8"/><ellipse cx="8" cy="5" rx="5" ry="3" fill="#6AA8F0" opacity="0.6"/><rect x="5" y="4.5" width="2" height="7" fill="#fff"/><rect x="9" y="4.5" width="2" height="7" fill="#fff"/></svg><svg class="a" style="left:235px;top:47px" width="15" height="16" viewBox="0 0 15 16"><rect x="2" y="2" width="5" height="12" fill="#fff" stroke="#2020A0" stroke-width="1" stroke-dasharray="1.5 1"/><rect x="2" y="10" width="5" height="4" fill="#1A1A90"/><path d="M5 3 L13 12 M13 3 L5 12" stroke="#E02020" stroke-width="2.4"/></svg><svg class="a" style="left:258px;top:47px" width="15" height="16" viewBox="0 0 15 16"><rect x="2" y="2" width="5" height="12" fill="#fff" stroke="#2020A0" stroke-width="1" stroke-dasharray="1.5 1"/><rect x="2" y="10" width="5" height="4" fill="#1A1A90"/><path d="M14 5 H10 V2 L6 6 L10 10 V7 H14 Z" fill="#30B030" stroke="#207020" stroke-width="0.5"/></svg><svg class="a" style="left:278px;top:53px" width="7" height="4" viewBox="0 0 7 4"><path d="M0 0 H7 L3.5 4 Z" fill="#000"/></svg><svg class="a" style="left:297px;top:47px" width="15" height="16" viewBox="0 0 15 16"><path d="M2 2 H11 L13 4 V15 H4 L2 13 Z" fill="#9090B0" stroke="#505070" stroke-width="0.8"/><rect x="5" y="3" width="5" height="11" fill="#C8C8E0"/><rect x="7" y="4" width="1.2" height="8" fill="#505070"/></svg><svg class="a" style="left:318px;top:47px" width="17" height="16" viewBox="0 0 17 16"><rect x="6" y="1" width="5" height="15" fill="#F0E000" stroke="#303000" stroke-width="0.8"/><rect x="1" y="5" width="15" height="5" fill="#F0E000" stroke="#303000" stroke-width="0.8"/><path d="M3 6 V8 M5 6 V9 M7 6 V8 M9 6 V9 M11 6 V8 M13 6 V9" stroke="#303000" stroke-width="0.6"/></svg><svg class="a" style="left:342px;top:47px" width="15" height="16" viewBox="0 0 15 16"><path d="M1 4 L4 1 H9 L12 3 L14 2 V6 L12 5 H9 V7 H5 Z" fill="#A0A0A8" stroke="#404048" stroke-width="0.6"/><rect x="4" y="7" width="3" height="7" fill="#606070"/><rect x="3" y="11" width="4" height="4" fill="#E02020"/><rect x="9" y="7" width="3" height="7" fill="#606070"/><rect x="8" y="11" width="4" height="4" fill="#2040E0"/></svg><svg class="a" style="left:362px;top:47px" width="17" height="16" viewBox="0 0 17 16"><circle cx="10" cy="6" r="4.5" fill="#D8ECF8" stroke="#707880" stroke-width="1.2"/><path d="M13 9 L16 13" stroke="#D08020" stroke-width="2"/><circle cx="5" cy="11" r="3.5" fill="#F0B040"/><circle cx="5" cy="11" r="1.5" fill="#D08020"/></svg><svg class="a" style="left:386px;top:47px" width="16" height="16" viewBox="0 0 16 16"><rect x="1" y="1" width="14" height="14" fill="#6A2A8A"/><rect x="1" y="1" width="14" height="6" fill="#3A1A6A"/><path d="M3 13 L12 4" stroke="#202020" stroke-width="2.2"/><path d="M11 2 L12 4 L14 4 L12.5 5.5 L13 8" stroke="#FFE040" stroke-width="1"/><circle cx="5" cy="4" r="0.8" fill="#fff"/><circle cx="12" cy="11" r="0.8" fill="#fff"/></svg><svg class="a" style="left:415px;top:47px" width="17" height="17" viewBox="0 0 17 17"><circle cx="8.5" cy="7.5" r="6.5" fill="#C8DCF0" stroke="#6A88B0" stroke-width="1"/><path d="M5 12 L4 16 L8 13.5" fill="#C8DCF0" stroke="#6A88B0" stroke-width="0.8"/><rect x="7.5" y="6" width="2" height="5.5" fill="#2050B0"/><circle cx="8.5" cy="4" r="1.2" fill="#2050B0"/></svg><svg class="a" style="left:453px;top:389px" width="15" height="14" viewBox="0 0 15 14"><rect x="1" y="1" width="13" height="12" fill="#C8E0F8" stroke="#5A7AA8" stroke-width="1"/><rect x="2" y="2" width="11" height="2" fill="#fff"/><path d="M7.5 4 L8.6 6.6 L11.3 6.8 L9.2 8.5 L9.9 11.2 L7.5 9.7 L5.1 11.2 L5.8 8.5 L3.7 6.8 L6.4 6.6 Z" fill="#F0C020" stroke="#B08010" stroke-width="0.4"/></svg><svg class="a" style="left:475px;top:388px" width="14" height="15" viewBox="0 0 14 15"><path d="M2 1 H10 L12 3 V14 H4 L2 12 Z" fill="#9090B0" stroke="#505070" stroke-width="0.8"/><rect x="4" y="2" width="6" height="10" fill="#C8C8E0"/><rect x="6.5" y="3" width="1.2" height="7" fill="#505070"/><circle cx="7" cy="4" r="1.2" fill="#505070"/></svg><svg class="a" style="left:496px;top:388px" width="15" height="15" viewBox="0 0 15 15"><rect x="5" y="1" width="5" height="14" fill="#F0E000" stroke="#303000" stroke-width="0.8"/><rect x="1" y="5" width="13" height="4" fill="#F0E000" stroke="#303000" stroke-width="0.8"/><path d="M3 6 V7.5 M5 6 V8 M7 6 V7.5 M9 6 V8 M11 6 V7.5" stroke="#303000" stroke-width="0.6"/></svg><svg class="a" style="left:517px;top:388px" width="16" height="16" viewBox="0 0 16 16"><rect x="0.5" y="0.5" width="15" height="15" fill="#000" stroke="#3A4A5A"/><path d="M4 1 V15 M8 1 V15 M12 1 V15 M1 4 H15 M1 8 H15 M1 12 H15" stroke="#0A6A0A" stroke-width="0.7"/><path d="M2 10 Q4 4 6 8 T10 8 T14 5" stroke="#40F040" stroke-width="1.1" fill="none"/></svg><svg class="a" style="left:460px;top:414px" width="15" height="13" viewBox="0 0 15 13"><path d="M2 9 L6 3 L9 6 L12 1" stroke="#D8D020" stroke-width="1.3" fill="none"/><path d="M6 3 L9 6" stroke="#50C030" stroke-width="1.3"/><path d="M2 10 Q6 9 9 10 L13 9 L12 12 H3 Z" fill="#F0A050"/><path d="M1 11 V13 H4" stroke="#3050A0" stroke-width="1.2" fill="none"/></svg><svg class="a" style="left:548px;top:414px" width="14" height="13" viewBox="0 0 14 13"><circle cx="9" cy="5" r="4.5" fill="#B8B8B8" stroke="#909090" stroke-width="0.5"/><path d="M2 4 Q2 1 5 1 Q8 1 8 5 L9 7 L8 8 V12 H3 Q1 11 2 8 Z" fill="#F4C8A8" stroke="#101010" stroke-width="1"/><circle cx="5.5" cy="5" r="0.8" fill="#000"/></svg><svg class="a" style="left:625px;top:415px" width="16" height="12" viewBox="0 0 16 12"><path d="M1 6 L3 4 L4 8 L5 4 L6 7 H8" stroke="#E02020" stroke-width="1.3" fill="none"/><rect x="8" y="0.5" width="2.2" height="11" fill="#101010"/><path d="M10 6 H15" stroke="#E02020" stroke-width="1.3"/></svg><svg class="a" style="left:725px;top:414px" width="16" height="13" viewBox="0 0 16 13"><path d="M1 10 L5 1 L7 1 L9 8 M3 6 H8" stroke="#E02828" stroke-width="2" fill="none"/><path d="M9 4 L11 10 L15 3 M11 10 L10 13" stroke="#C01818" stroke-width="1.6" fill="none"/></svg><svg class="a" style="left:810px;top:413px" width="15" height="14" viewBox="0 0 15 14"><path d="M1 7 L3 6 L5 12 L8 1 H15" stroke="#2030B0" stroke-width="1.4" fill="none"/><path d="M9 11 V5 Q9 3 11 3 M8 6 H11" stroke="#209030" stroke-width="1.5" fill="none"/><path d="M13 3 V9 M13 10.5 V12" stroke="#C02020" stroke-width="1.4"/></svg><svg class="a" style="left:893px;top:415px" width="16" height="12" viewBox="0 0 16 12"><path d="M2 1 L4 8 H9 L14 5 V11 L9 9 H4 Z" fill="#F0C818" stroke="#806000" stroke-width="0.8"/><circle cx="15" cy="8" r="0.8" fill="#303030"/></svg><svg class="a" style="left:459px;top:428px" width="11" height="15" viewBox="0 0 11 15"><rect x="0.5" y="0.5" width="10" height="14" rx="1" fill="#808080" stroke="#505050"/><rect x="2" y="2" width="7" height="5" fill="#40C040"/><rect x="2" y="8" width="7" height="5" fill="#909090"/><circle cx="5.5" cy="10.5" r="1" fill="#A020A0"/></svg><svg class="a" style="left:543px;top:429px" width="15" height="15" viewBox="0 0 15 15"><path d="M1 13 H4 V2 H9 V13 H14" stroke="#20D020" stroke-width="1.3" fill="none"/><path d="M1 5 H14" stroke="#E04040" stroke-width="0.8" stroke-dasharray="1 1"/><path d="M1 13.8 H14" stroke="#2020E0" stroke-width="0.8" stroke-dasharray="1 1"/><path d="M1 9 H14" stroke="#606060" stroke-width="0.8"/></svg><svg class="a" style="left:619px;top:431px" width="15" height="11" viewBox="0 0 15 11"><path d="M1 9 L5 2 L9 9 Z" fill="#E8F0F8" stroke="#A0B8D0" stroke-width="0.6"/><path d="M7 4 L15 2 V5 Z" fill="#F02020"/><path d="M7 5 L15 5 V7 Z" fill="#F0C020"/><path d="M8 7 L15 7 V9 Z" fill="#20C020"/><path d="M9 9 L15 9 V10 Z" fill="#2060F0"/></svg><svg class="a" style="left:677px;top:429px" width="17" height="15" viewBox="0 0 17 15"><path d="M3 1 H14 L16 4 V11 L14 14 H3 L1 11 V4 Z" fill="#606060" stroke="#202020" stroke-width="0.8"/><rect x="3" y="4" width="11" height="7" fill="#E02020"/><path d="M5 5.5 V9.5 M8.5 5.5 V9.5 M12 5.5 V9.5" stroke="#F8C8C8" stroke-width="1.2"/></svg><svg class="a" style="left:764px;top:429px" width="14" height="15" viewBox="0 0 14 15"><path d="M2 14 V9 M5 14 V5 M8 14 V1 M11 14 V6 M13 14 V10" stroke="#2A4A5A" stroke-width="1.8"/><path d="M2 14 V11 M5 14 V9 M8 14 V8 M11 14 V10" stroke="#A8C8D0" stroke-width="0.8"/></svg><svg class="a" style="left:849px;top:428px" width="16" height="16" viewBox="0 0 16 16"><rect x="4" y="1" width="11" height="14" fill="#C8D8F0" stroke="#4070C0" stroke-width="1"/><path d="M6 4 H13 M6 7 H13 M6 10 H13" stroke="#3060B0" stroke-width="1"/><text x="0" y="12" font-size="11" font-family="Liberation Sans" font-weight="bold" fill="#2050A0">$</text></svg><svg class="a" style="left:929px;top:429px" width="12" height="15" viewBox="0 0 12 15"><path d="M1 1 H8 L11 4 V14 H1 Z" fill="#F8F4E0" stroke="#6A78B0" stroke-width="1"/><path d="M3 5 H9 M3 7.5 H9 M3 10 H9" stroke="#8090A8" stroke-width="0.8"/></svg><svg class="a" style="left:16px;top:720px" width="21" height="19" viewBox="0 0 21 19"><path d="M3 1 V16 M1 14 H19" stroke="#30A040" stroke-width="1.2"/><path d="M1 4 H19 M1 9 H19 M8 1 V16 M14 1 V16" stroke="#60B070" stroke-width="0.5" stroke-dasharray="1 1.5"/><path d="M1 9.5 L10 1 V5.5 H20 V13.5 H10 V18 Z" fill="#3A9EA4" stroke="#1A7A80" stroke-width="0.7"/><path d="M10 6 H20 V9 H10 Z" fill="#9AD4D4" opacity="0.8"/></svg><svg class="a" style="left:42px;top:720px" width="21" height="19" viewBox="0 0 21 19"><path d="M3 1 V16 M1 14 H19" stroke="#30A040" stroke-width="1.2"/><path d="M1 4 H19 M1 9 H19 M8 1 V16 M14 1 V16" stroke="#60B070" stroke-width="0.5" stroke-dasharray="1 1.5"/><path d="M20 9.5 L11 1 V5.5 H1 V13.5 H11 V18 Z" fill="#5AAEB4" stroke="#1A7A80" stroke-width="0.7"/><path d="M1 6 H11 V9 H1 Z" fill="#A8DADA" opacity="0.8"/></svg><svg class="a" style="left:68px;top:720px" width="21" height="19" viewBox="0 0 21 19"><path d="M3 2 V16 M1 15 H19" stroke="#30A040" stroke-width="1.2"/><circle cx="3" cy="2.5" r="1" fill="#30A040"/><path d="M2 18 L9 11.5" stroke="#D07818" stroke-width="2.6"/><circle cx="13" cy="7.5" r="6.6" fill="#D8E8F8" stroke="#A0A8B8" stroke-width="1"/><path d="M7.5 6 A6 6 0 0 1 18.5 6 Z" fill="#7AA8E8" opacity="0.7"/><path d="M6 16 H19 M8 14 L5.5 16 L8 18 M17 14 L19.5 16 L17 18" stroke="#3A9AA0" stroke-width="1.5" fill="none"/><path d="M13 3.5 V11.5 M9 7.5 H17" stroke="#F02818" stroke-width="2.8"/></svg><svg class="a" style="left:95px;top:720px" width="21" height="19" viewBox="0 0 21 19"><path d="M3 2 V16 M1 15 H19" stroke="#30A040" stroke-width="1.2"/><circle cx="3" cy="2.5" r="1" fill="#30A040"/><path d="M2 18 L9 11.5" stroke="#D07818" stroke-width="2.6"/><circle cx="13" cy="7.5" r="6.6" fill="#D8E8F8" stroke="#A0A8B8" stroke-width="1"/><path d="M7.5 6 A6 6 0 0 1 18.5 6 Z" fill="#7AA8E8" opacity="0.7"/><path d="M6 16 H19 M8 14 L5.5 16 L8 18 M17 14 L19.5 16 L17 18" stroke="#3A9AA0" stroke-width="1.5" fill="none"/><path d="M9 7.5 H17" stroke="#2030A0" stroke-width="2.8"/></svg><svg class="a" style="left:122px;top:719px" width="22" height="20" viewBox="0 0 22 20"><path d="M3 1 V17 M1 16 H21" stroke="#30A040" stroke-width="1.2"/><rect x="5" y="3" width="15" height="11" fill="#E0C8A0" stroke="#5A3A20" stroke-width="1" stroke-dasharray="2 1"/><rect x="6" y="4" width="13" height="4" fill="#B8C8E0"/><path d="M2 18 L7 13" stroke="#D07818" stroke-width="2.2"/></svg><svg class="a" style="left:148px;top:720px" width="21" height="18" viewBox="0 0 21 18"><path d="M3 1 V16 M1 14 H19" stroke="#30A040" stroke-width="1.2"/><path d="M1 4 H19 M1 9 H19 M8 1 V16 M14 1 V16" stroke="#60B070" stroke-width="0.5" stroke-dasharray="1 1.5"/><circle cx="12" cy="7" r="6" fill="#C8DCF8" stroke="#8090A8" stroke-width="1"/><path d="M4 4 L16 16 M16 4 L4 16" stroke="#E04848" stroke-width="3.5"/><path d="M4 4 L16 16 M16 4 L4 16" stroke="#F4B0B0" stroke-width="1.5"/></svg><svg class="a" style="left:15px;top:676px" width="15" height="15" viewBox="0 0 15 15"><circle cx="6" cy="6" r="4.5" fill="#D8E8FA" stroke="#A8B8C8" stroke-width="1.2"/><path d="M9.5 9.5 L13.5 13.5" stroke="#505050" stroke-width="2.2"/></svg><svg class="a" style="left:345px;top:676px" width="15" height="15" viewBox="0 0 15 15"><circle cx="6" cy="6" r="4.5" fill="#D8E8FA" stroke="#A8B8C8" stroke-width="1.2"/><path d="M9.5 9.5 L13.5 13.5" stroke="#505050" stroke-width="2.2"/></svg><svg class="a" style="left:14px;top:696px" width="16" height="15" viewBox="0 0 16 15"><path d="M1 5 H8 V1 L15 7.5 L8 14 V10 H1 Z" fill="#70C860" stroke="#50A848" stroke-width="0.6"/></svg><svg class="a" style="left:344px;top:695px" width="16" height="16" viewBox="0 0 16 16"><path d="M8 1 L15 8 H11 V15 H5 V8 H1 Z" fill="#70C860" stroke="#50A848" stroke-width="0.6"/></svg><svg class="a" style="left:317px;top:674px" width="14" height="16" viewBox="0 0 14 16"><rect x="5" y="1" width="5" height="3.5" fill="#A0A0A0" stroke="#303030" stroke-width="0.6"/><circle cx="7.5" cy="2.6" r="1" fill="#E0E020"/><rect x="3" y="4.5" width="9" height="8" fill="#C8C8C8" stroke="#303030" stroke-width="0.8"/><rect x="4.5" y="6" width="2" height="5" fill="#202020"/><rect x="8" y="6" width="2.2" height="1.7" fill="#F03020"/><rect x="8" y="7.7" width="2.2" height="1.7" fill="#F0B020"/><rect x="8" y="9.4" width="2.2" height="1.7" fill="#30B030"/><path d="M1 7 H3 M1 9.5 H3" stroke="#303030" stroke-width="0.9"/><rect x="1" y="12.5" width="12" height="2.2" rx="1" fill="#202020"/></svg><svg class="a" style="left:317px;top:695px" width="14" height="16" viewBox="0 0 14 16"><rect x="5" y="1" width="5" height="3.5" fill="#A0A0A0" stroke="#303030" stroke-width="0.6"/><circle cx="7.5" cy="2.6" r="1" fill="#E0E020"/><rect x="3" y="4.5" width="9" height="8" fill="#C8C8C8" stroke="#303030" stroke-width="0.8"/><rect x="4.5" y="6" width="2" height="5" fill="#202020"/><rect x="8" y="6" width="2.2" height="1.7" fill="#F03020"/><rect x="8" y="7.7" width="2.2" height="1.7" fill="#F0B020"/><rect x="8" y="9.4" width="2.2" height="1.7" fill="#30B030"/><path d="M1 7 H3 M1 9.5 H3" stroke="#303030" stroke-width="0.9"/><rect x="1" y="12.5" width="12" height="2.2" rx="1" fill="#202020"/></svg><svg class="a" style="left:344px;top:720px" width="20" height="19" viewBox="0 0 20 19"><path d="M2 1 V17 M1 15 H19" stroke="#30A040" stroke-width="1"/><path d="M10 18 L2 10 H6 V1 H14 V10 H18 Z" fill="#6ABAC0" stroke="#1A7A80" stroke-width="0.8"/><path d="M8 2 V10" stroke="#C8EEF0" stroke-width="1.5"/></svg><svg class="a" style="left:370px;top:720px" width="20" height="19" viewBox="0 0 20 19"><path d="M2 1 V17 M1 15 H19" stroke="#30A040" stroke-width="1"/><path d="M10 1 L2 9 H6 V18 H14 V9 H18 Z" fill="#6ABAC0" stroke="#1A7A80" stroke-width="0.8"/><path d="M8 9 V17" stroke="#C8EEF0" stroke-width="1.5"/></svg><svg class="a" style="left:396px;top:720px" width="21" height="19" viewBox="0 0 21 19"><path d="M3 1 V17 M1 16 H19" stroke="#30A040" stroke-width="1"/><path d="M3 2 L1 5 H5 Z M3 16 L1 13 H5 Z" fill="#3A9AA0"/><path d="M2 17 L8 11" stroke="#D07818" stroke-width="2.2"/><circle cx="12" cy="7" r="6" fill="#C8DCF8" stroke="#8090A8" stroke-width="1"/><path d="M12 3.5 V10.5 M8.5 7 H15.5" stroke="#E82020" stroke-width="2.4"/></svg><svg class="a" style="left:422px;top:720px" width="21" height="19" viewBox="0 0 21 19"><path d="M3 1 V17 M1 16 H19" stroke="#30A040" stroke-width="1"/><path d="M3 2 L1 5 H5 Z M3 16 L1 13 H5 Z" fill="#3A9AA0"/><path d="M2 17 L8 11" stroke="#D07818" stroke-width="2.2"/><circle cx="12" cy="7" r="6" fill="#C8DCF8" stroke="#8090A8" stroke-width="1"/><path d="M8.5 7 H15.5" stroke="#2030A0" stroke-width="2.4"/></svg>
</body></html>
